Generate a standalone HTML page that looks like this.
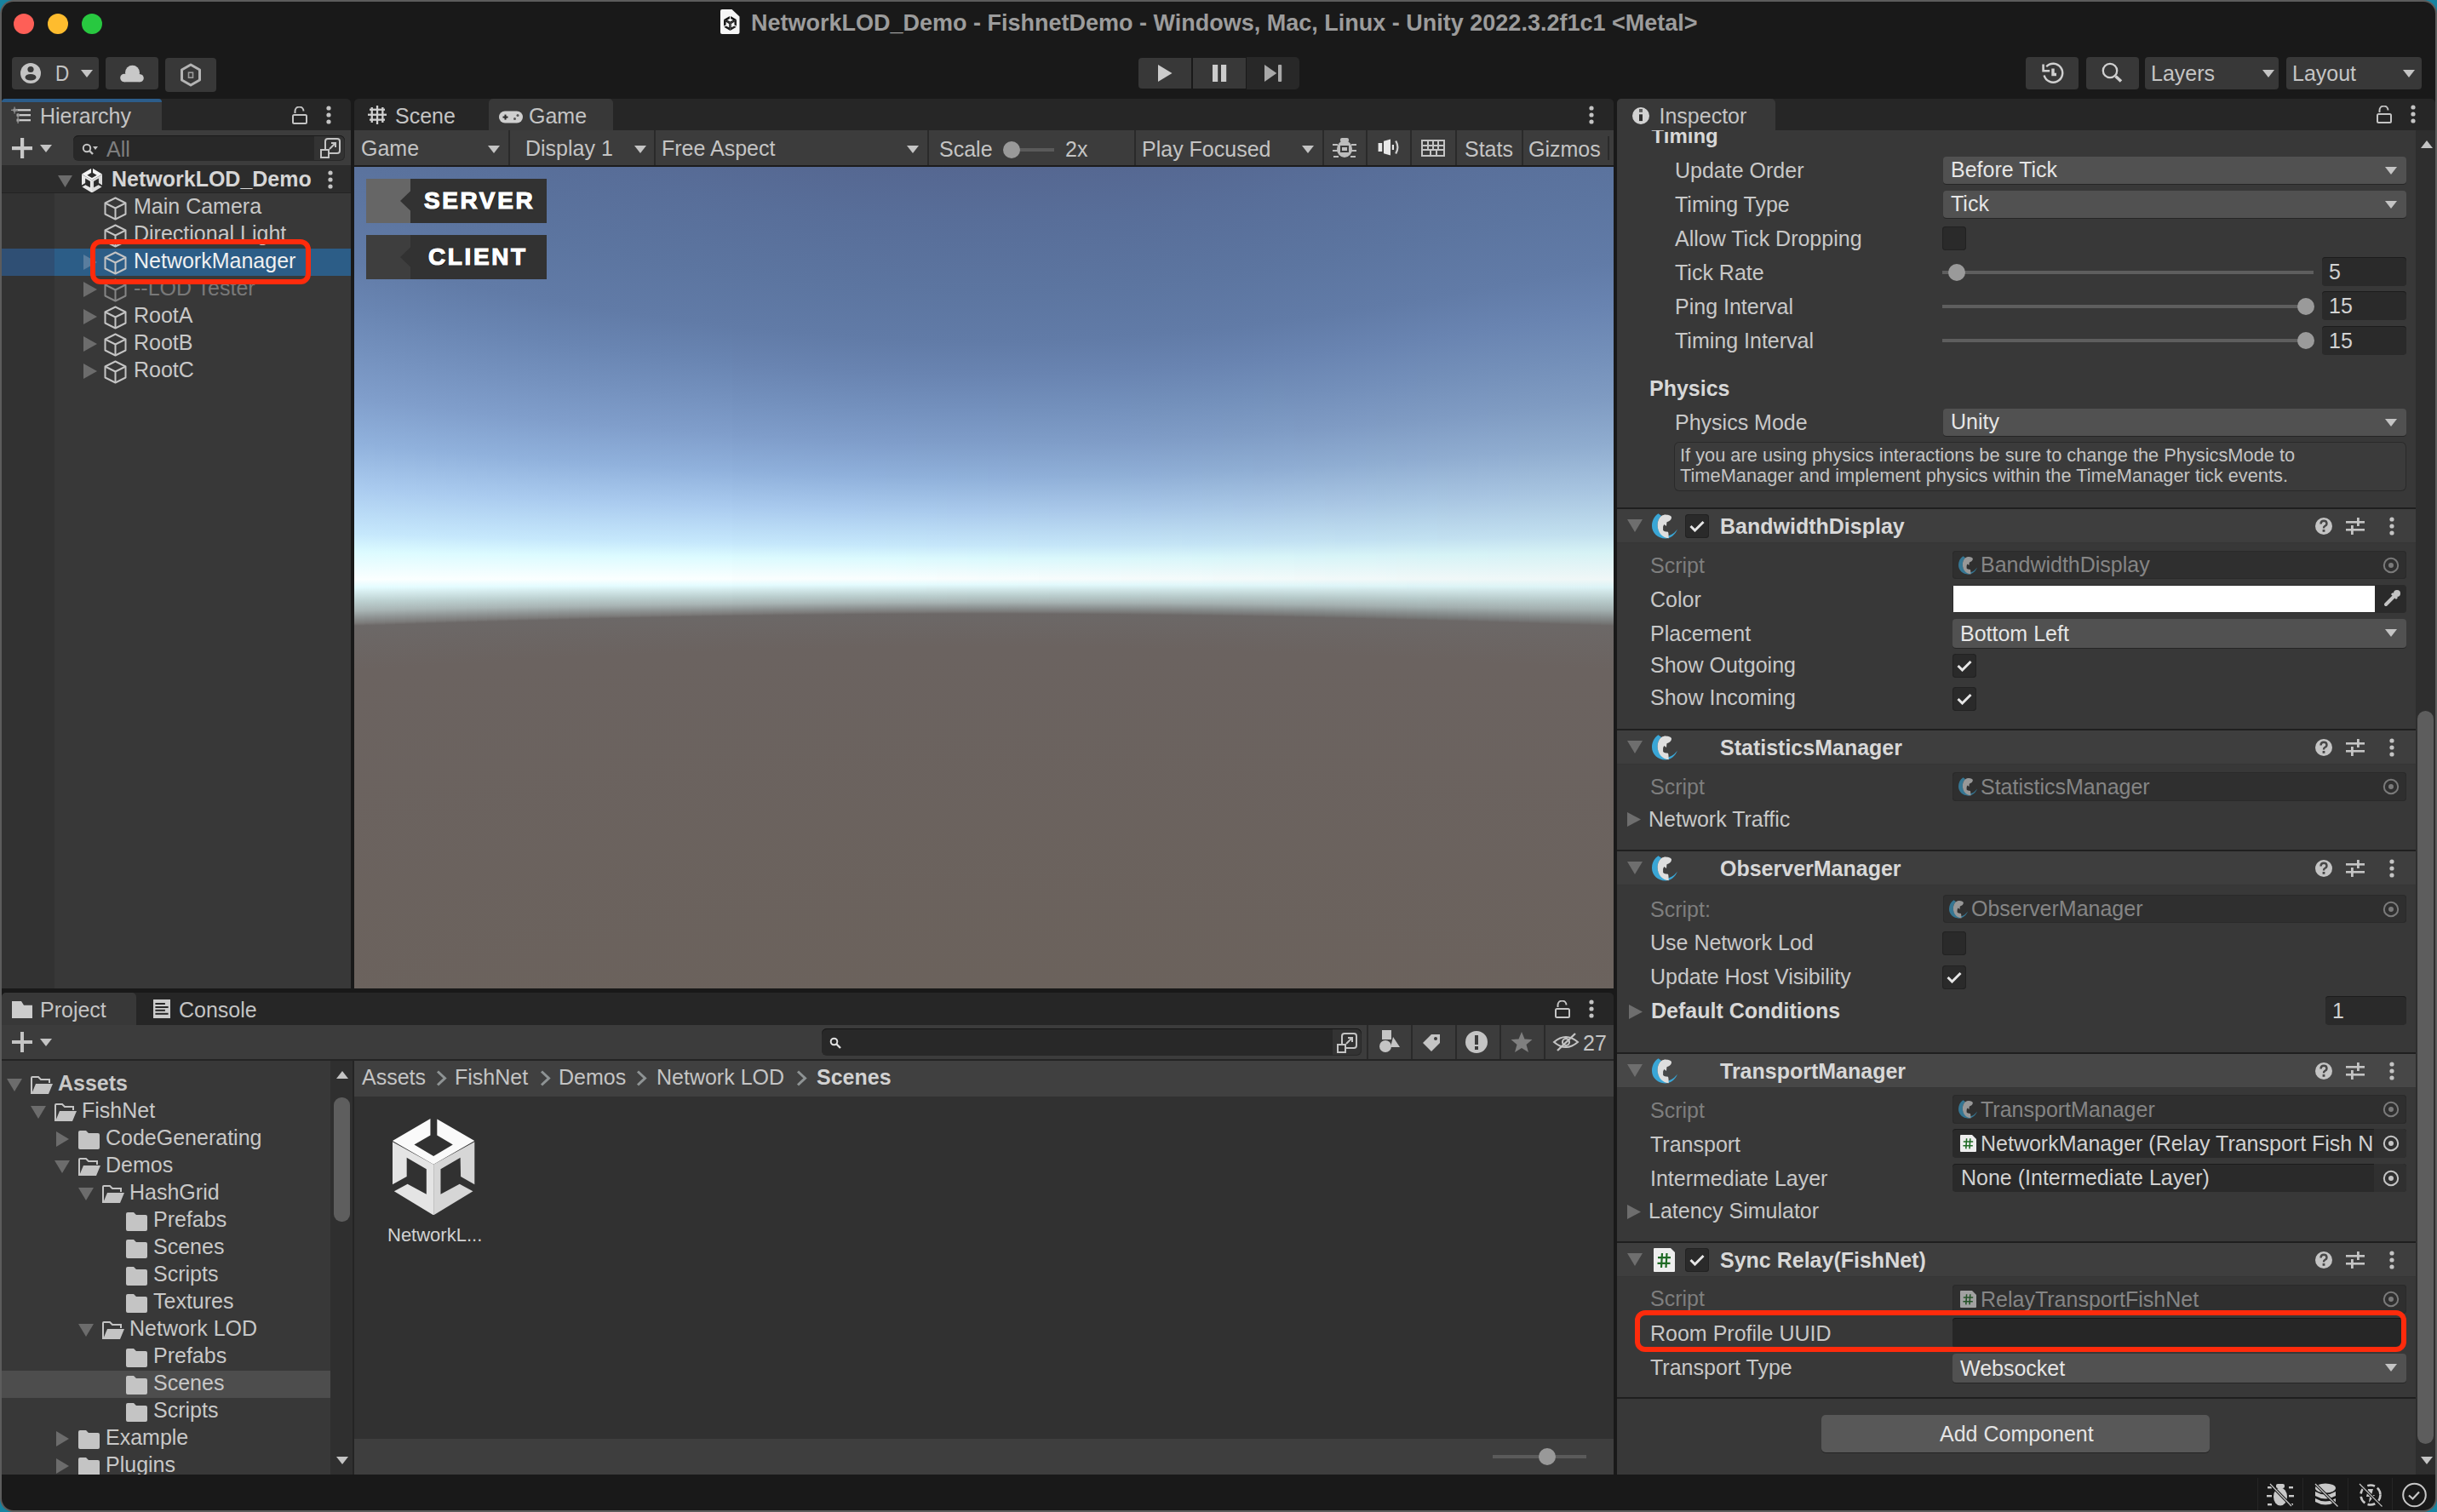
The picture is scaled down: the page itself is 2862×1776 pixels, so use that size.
<!DOCTYPE html><html><head><meta charset="utf-8"><style>
html,body{margin:0;padding:0;}
body{width:2862px;height:1776px;position:relative;overflow:hidden;background:#1783a0;font-family:"Liberation Sans",sans-serif;}
body div, body svg{position:absolute;}
.t{white-space:nowrap;line-height:1;font-family:"Liberation Sans",sans-serif;}
</style></head><body>
<div style="left:0px;top:0px;width:2862px;height:1776px;background:#5c5c5c;border-radius:16px;"></div><div style="left:2px;top:2px;width:2858px;height:1772px;background:#191919;border-radius:14px;"></div><div style="left:16px;top:16px;width:24px;height:24px;background:#fe5f57;border-radius:50%;"></div><div style="left:56px;top:16px;width:24px;height:24px;background:#febc2e;border-radius:50%;"></div><div style="left:96px;top:16px;width:24px;height:24px;background:#28c840;border-radius:50%;"></div><svg style="left:846px;top:11px;" width="23" height="29" viewBox="0 0 23 29"><path d="M2 0 H13.5 L22.5 8.5 V27 Q22.5 29 20.5 29 H2 Q0 29 0 27 V2 Q0 0 2 0Z" fill="#f6f6f6"/></svg><svg style="left:850px;top:18.8px" width="15" height="17" viewBox="235 160 1040 1225" preserveAspectRatio="none"><polygon points="235,440 715,160 715,370 510,490 755,635 1000,490 800,370 800,165 1275,440 755,740" fill="#111"/><polygon points="235,455 755,740 755,1385 255,1080 425,990 665,1120 665,800 415,655 415,895 235,995" fill="#181818"/><polygon points="1275,455 755,740 755,1385 1255,1080 1085,990 845,1120 845,800 1095,655 1100,895 1275,995" fill="#222"/></svg><div class="t" style="left:882px;top:14.1px;font-size:27px;color:#9c9c9c;font-weight:bold;">NetworkLOD_Demo - FishnetDemo - Windows, Mac, Linux - Unity 2022.3.2f1c1 &lt;Metal&gt;</div><div style="left:14px;top:67px;width:102px;height:38px;background:#383838;border-radius:4px;"></div><svg style="left:24px;top:74px;" width="24" height="24" viewBox="0 0 24 24"><circle cx="12" cy="12" r="12" fill="#c4c4c4"/><circle cx="12" cy="7.5" r="3.6" fill="#383838"/><ellipse cx="12" cy="16.8" rx="6.5" ry="3.8" fill="#383838"/></svg><div class="t" style="left:64px;top:73.8px;font-size:25px;color:#c4c4c4;font-weight:normal;transform:scaleX(0.9);">D</div><svg style="left:95.0px;top:82.0px;" width="14" height="9" viewBox="0 0 14 9"><polygon points="0,0 14,0 7.0,9" fill="#c4c4c4"/></svg><div style="left:124px;top:67px;width:62px;height:38px;background:#383838;border-radius:4px;"></div><svg style="left:141px;top:75.8px;" width="28" height="21" viewBox="0 0 28 21"><g fill="#c8c8c8"><circle cx="14.5" cy="9.3" r="8.5"/><circle cx="5" cy="15.5" r="4.8"/><circle cx="23.3" cy="15.8" r="4.5"/><rect x="5" y="11" width="18.3" height="9.3"/></g></svg><div style="left:194px;top:68px;width:60px;height:39.5px;background:#383838;border-radius:4px;"></div><svg style="left:211px;top:74px;" width="26" height="28" viewBox="0 0 26 28"><path d="M13 2 L23.5 8 V20 L13 26 L2.5 20 V8 Z" fill="none" stroke="#b4b4b4" stroke-width="3" stroke-linejoin="round"/><rect x="10.5" y="11.2" width="5" height="6" fill="none" stroke="#9a9a9a" stroke-width="1.6"/></svg><div style="left:1337px;top:68px;width:126px;height:36px;background:#383838;border-radius:4px 0 0 4px;"></div><div style="left:1399px;top:68px;width:2px;height:36px;background:#191919;"></div><div style="left:1464px;top:67.2px;width:61.5px;height:37.5px;background:#282828;border-radius:0 5px 5px 0;"></div><svg style="left:1360px;top:76px;" width="16.5" height="20" viewBox="0 0 16.5 20"><polygon points="0,0 16.5,10 0,20" fill="#cccccc"/></svg><svg style="left:1424px;top:76px;" width="17" height="20" viewBox="0 0 17 20"><rect x="0" y="0" width="6.2" height="20" fill="#cccccc"/><rect x="10" y="0" width="6.2" height="20" fill="#cccccc"/></svg><svg style="left:1485px;top:76px;" width="21" height="20" viewBox="0 0 21 20"><polygon points="0,0 14.3,10 0,20" fill="#a8a8a8"/><rect x="16" y="0" width="4.2" height="20" rx="1" fill="#a8a8a8"/></svg><div style="left:2379px;top:67px;width:62px;height:38px;background:#383838;border-radius:4px;"></div><svg style="left:2397px;top:72px;" width="28" height="28" viewBox="0 0 28 28"><path d="M6.2 6.2 A11 11 0 1 1 3.6 16.5" fill="none" stroke="#d0d0d0" stroke-width="2.4"/><path d="M2.6 3.5 V11.2 H10.2" fill="none" stroke="#d0d0d0" stroke-width="2.6"/><path d="M14 8.5 V15.5 H18" fill="none" stroke="#d0d0d0" stroke-width="3.4"/></svg><div style="left:2450px;top:67px;width:62px;height:38px;background:#383838;border-radius:4px;"></div><svg style="left:2467px;top:72px;" width="28" height="28" viewBox="0 0 28 28"><circle cx="11" cy="11" r="8.2" fill="none" stroke="#d0d0d0" stroke-width="2.3"/><line x1="17.5" y1="17.5" x2="24" y2="23.5" stroke="#d0d0d0" stroke-width="3.6"/></svg><div style="left:2519px;top:67px;width:157px;height:38px;background:#383838;border-radius:4px;"></div><div class="t" style="left:2526px;top:73.8px;font-size:25px;color:#c4c4c4;">Layers</div><svg style="left:2656.5px;top:82.0px;" width="14" height="9" viewBox="0 0 14 9"><polygon points="0,0 14,0 7.0,9" fill="#c4c4c4"/></svg><div style="left:2685px;top:67px;width:159px;height:38px;background:#383838;border-radius:4px;"></div><div class="t" style="left:2692px;top:73.8px;font-size:25px;color:#c4c4c4;">Layout</div><svg style="left:2822.0px;top:82.0px;" width="14" height="9" viewBox="0 0 14 9"><polygon points="0,0 14,0 7.0,9" fill="#c4c4c4"/></svg><div style="left:2650.5px;top:1736px;width:1.5px;height:37.5px;background:#262626;"></div><div style="left:2703.5px;top:1736px;width:1.5px;height:37.5px;background:#262626;"></div><div style="left:2756.5px;top:1736px;width:1.5px;height:37.5px;background:#262626;"></div><div style="left:2808.5px;top:1736px;width:1.5px;height:37.5px;background:#262626;"></div><div style="left:2px;top:116px;width:410px;height:37px;background:#262626;border-radius:5px 5px 0 0;"></div><div style="left:2px;top:116px;width:188px;height:37px;background:#3a3a3a;border-radius:5px 5px 0 0;"></div><div style="left:2px;top:116px;width:188px;height:4px;background:#2c5d8a;border-radius:4px 4px 0 0;"></div><svg style="left:13px;top:125px;" width="26" height="22" viewBox="0 0 26 22"><g fill="#d0d0d0"><rect x="6" y="3.2" width="17" height="2.2"/><rect x="10" y="9.1" width="13" height="2.2"/><rect x="10" y="15.1" width="13" height="2.2"/><rect x="2.6" y="2.8" width="3" height="3"/><rect x="6.6" y="8.7" width="3" height="3"/><rect x="6.6" y="14.7" width="3" height="3"/></g><g fill="#8a8a8a"><rect x="3.4" y="0.5" width="1.4" height="8"/><rect x="7.4" y="8" width="1.4" height="12"/><rect x="0" y="3.6" width="8" height="1.4"/></g></svg><div class="t" style="left:47px;top:123.8px;font-size:25px;color:#c4c4c4;">Hierarchy</div><svg style="left:343px;top:125px;" width="18" height="21" viewBox="0 0 18 21"><path d="M3.5 8 V5.5 A5 5 0 0 1 13.5 5.5" fill="none" stroke="#c4c4c4" stroke-width="2"/><rect x="1" y="10" width="16" height="10" rx="1.5" fill="none" stroke="#c4c4c4" stroke-width="2"/></svg><svg style="left:382px;top:122.5px;" width="8" height="24" viewBox="0 0 8 24"><circle cx="4" cy="4" r="2.6" fill="#c4c4c4"/><circle cx="4" cy="12" r="2.6" fill="#c4c4c4"/><circle cx="4" cy="20" r="2.6" fill="#c4c4c4"/></svg><div style="left:2px;top:153px;width:410px;height:41px;background:#3c3c3c;"></div><svg style="left:14px;top:162px;" width="24" height="24" viewBox="0 0 24 24"><rect x="10" y="0" width="4.2" height="24" fill="#c8c8c8"/><rect x="0" y="10" width="24" height="4.2" fill="#c8c8c8"/></svg><svg style="left:47.0px;top:169.5px;" width="14" height="9" viewBox="0 0 14 9"><polygon points="0,0 14,0 7.0,9" fill="#c4c4c4"/></svg><div style="left:86px;top:159px;width:319px;height:30px;background:#282828;border-radius:6px;box-shadow:inset 0 1px 0 #1a1a1a;"></div><div style="left:369px;top:160px;width:35px;height:28px;background:#333333;border-radius:0 5px 5px 0;"></div><svg style="left:96px;top:168px;" width="20" height="16" viewBox="0 0 20 16"><circle cx="6" cy="6" r="4.2" fill="none" stroke="#c4c4c4" stroke-width="2"/><line x1="9" y1="9" x2="13" y2="13" stroke="#c4c4c4" stroke-width="2.4"/><polygon points="13,4 19,4 16,8" fill="#c4c4c4"/></svg><div class="t" style="left:125px;top:162.8px;font-size:25px;color:#7e7e7e;">All</div><svg style="left:376px;top:162px;" width="24" height="24" viewBox="0 0 24 24"><rect x="1" y="14" width="9" height="9" fill="none" stroke="#c4c4c4" stroke-width="2"/><path d="M6 14 V4 Q6 1 9 1 H20 Q23 1 23 4 V15 Q23 18 20 18 H10" fill="none" stroke="#c4c4c4" stroke-width="2"/><path d="M11 13 L18 6 M13 6 H18 V11" fill="none" stroke="#c4c4c4" stroke-width="2"/></svg><div style="left:2px;top:194px;width:410px;height:967px;background:#383838;"></div><div style="left:2px;top:227px;width:62px;height:934px;background:#323232;"></div><div style="left:2px;top:194px;width:410px;height:32px;background:#2c2c2c;"></div><div style="left:2px;top:226px;width:410px;height:1px;background:#242424;"></div><svg style="left:68.0px;top:206.0px;" width="17" height="14" viewBox="0 0 17 14"><polygon points="0,0 17,0 8.5,14" fill="#6c6c6c"/></svg><svg style="left:96px;top:197.5px" width="24" height="28.5" viewBox="235 160 1040 1225" preserveAspectRatio="none"><polygon points="235,440 715,160 715,370 510,490 755,635 1000,490 800,370 800,165 1275,440 755,740" fill="#f4f4f4"/><polygon points="235,455 755,740 755,1385 255,1080 425,990 665,1120 665,800 415,655 415,895 235,995" fill="#e8e8e8"/><polygon points="1275,455 755,740 755,1385 1255,1080 1085,990 845,1120 845,800 1095,655 1100,895 1275,995" fill="#dcdcdc"/></svg><div class="t" style="left:131px;top:197.8px;font-size:25px;color:#d6d6d6;font-weight:bold;">NetworkLOD_Demo</div><svg style="left:384px;top:199px;" width="8" height="24" viewBox="0 0 8 24"><circle cx="4" cy="4" r="2.6" fill="#c4c4c4"/><circle cx="4" cy="12" r="2.6" fill="#c4c4c4"/><circle cx="4" cy="20" r="2.6" fill="#c4c4c4"/></svg><svg style="left:122px;top:230.5px;" width="27" height="28" viewBox="0 0 27 28"><g fill="none" stroke="#c4c4c4" stroke-width="2" stroke-linejoin="round"><path d="M13.5 1.5 L25.5 7.5 V20.5 L13.5 26.5 L1.5 20.5 V7.5 Z"/><path d="M1.5 7.5 L13.5 13.5 L25.5 7.5 M13.5 13.5 V26.5"/></g></svg><div class="t" style="left:157px;top:229.8px;font-size:25px;color:#c8c8c8;">Main Camera</div><svg style="left:122px;top:262.5px;" width="27" height="28" viewBox="0 0 27 28"><g fill="none" stroke="#c4c4c4" stroke-width="2" stroke-linejoin="round"><path d="M13.5 1.5 L25.5 7.5 V20.5 L13.5 26.5 L1.5 20.5 V7.5 Z"/><path d="M1.5 7.5 L13.5 13.5 L25.5 7.5 M13.5 13.5 V26.5"/></g></svg><div class="t" style="left:157px;top:261.8px;font-size:25px;color:#c8c8c8;">Directional Light</div><div style="left:2px;top:292px;width:410px;height:32px;background:#2c5d87;"></div><div style="left:2px;top:292px;width:62px;height:32px;background:#2f4f74;"></div><svg style="left:98.0px;top:299.0px;" width="16" height="18" viewBox="0 0 16 18"><polygon points="0,0 16,9.0 0,18" fill="#5a7d9e"/></svg><svg style="left:122px;top:294.5px;" width="27" height="28" viewBox="0 0 27 28"><g fill="none" stroke="#c4c4c4" stroke-width="2" stroke-linejoin="round"><path d="M13.5 1.5 L25.5 7.5 V20.5 L13.5 26.5 L1.5 20.5 V7.5 Z"/><path d="M1.5 7.5 L13.5 13.5 L25.5 7.5 M13.5 13.5 V26.5"/></g></svg><div class="t" style="left:157px;top:293.8px;font-size:25px;color:#f0f0f0;">NetworkManager</div><svg style="left:98.0px;top:331.0px;" width="16" height="18" viewBox="0 0 16 18"><polygon points="0,0 16,9.0 0,18" fill="#6c6c6c"/></svg><svg style="left:122px;top:326.5px;" width="27" height="28" viewBox="0 0 27 28"><g fill="none" stroke="#858585" stroke-width="2" stroke-linejoin="round"><path d="M13.5 1.5 L25.5 7.5 V20.5 L13.5 26.5 L1.5 20.5 V7.5 Z"/><path d="M1.5 7.5 L13.5 13.5 L25.5 7.5 M13.5 13.5 V26.5"/></g></svg><div class="t" style="left:157px;top:325.8px;font-size:25px;color:#787878;">--LOD Tester</div><svg style="left:98.0px;top:363.0px;" width="16" height="18" viewBox="0 0 16 18"><polygon points="0,0 16,9.0 0,18" fill="#6c6c6c"/></svg><svg style="left:122px;top:358.5px;" width="27" height="28" viewBox="0 0 27 28"><g fill="none" stroke="#c4c4c4" stroke-width="2" stroke-linejoin="round"><path d="M13.5 1.5 L25.5 7.5 V20.5 L13.5 26.5 L1.5 20.5 V7.5 Z"/><path d="M1.5 7.5 L13.5 13.5 L25.5 7.5 M13.5 13.5 V26.5"/></g></svg><div class="t" style="left:157px;top:357.8px;font-size:25px;color:#c8c8c8;">RootA</div><svg style="left:98.0px;top:395.0px;" width="16" height="18" viewBox="0 0 16 18"><polygon points="0,0 16,9.0 0,18" fill="#6c6c6c"/></svg><svg style="left:122px;top:390.5px;" width="27" height="28" viewBox="0 0 27 28"><g fill="none" stroke="#c4c4c4" stroke-width="2" stroke-linejoin="round"><path d="M13.5 1.5 L25.5 7.5 V20.5 L13.5 26.5 L1.5 20.5 V7.5 Z"/><path d="M1.5 7.5 L13.5 13.5 L25.5 7.5 M13.5 13.5 V26.5"/></g></svg><div class="t" style="left:157px;top:389.8px;font-size:25px;color:#c8c8c8;">RootB</div><svg style="left:98.0px;top:427.0px;" width="16" height="18" viewBox="0 0 16 18"><polygon points="0,0 16,9.0 0,18" fill="#6c6c6c"/></svg><svg style="left:122px;top:422.5px;" width="27" height="28" viewBox="0 0 27 28"><g fill="none" stroke="#c4c4c4" stroke-width="2" stroke-linejoin="round"><path d="M13.5 1.5 L25.5 7.5 V20.5 L13.5 26.5 L1.5 20.5 V7.5 Z"/><path d="M1.5 7.5 L13.5 13.5 L25.5 7.5 M13.5 13.5 V26.5"/></g></svg><div class="t" style="left:157px;top:421.8px;font-size:25px;color:#c8c8c8;">RootC</div><div style="left:105.5px;top:280.5px;width:247px;height:41px;border:6.5px solid #fe2b0c;border-radius:12px;"></div><div style="left:412px;top:116px;width:4px;height:1045px;background:#191919;"></div><div style="left:416px;top:116px;width:1479px;height:37px;background:#262626;border-radius:5px 5px 0 0;"></div><div style="left:574px;top:116px;width:146px;height:37px;background:#383838;border-radius:5px 5px 0 0;"></div><svg style="left:432px;top:124px;" width="22" height="22" viewBox="0 0 22 22"><g fill="#d0d0d0"><rect x="3.6" y="2" width="2.3" height="18"/><rect x="9.9" y="0" width="2.3" height="22"/><rect x="16.2" y="2" width="2.3" height="18"/><rect x="2" y="3.6" width="18" height="2.3"/><rect x="0" y="9.6" width="22" height="2.3"/><rect x="2" y="15.5" width="18" height="2.3"/></g></svg><div class="t" style="left:464px;top:123.8px;font-size:25px;color:#c4c4c4;">Scene</div><svg style="left:586px;top:129.5px;" width="28" height="15" viewBox="0 0 28 15"><rect x="0" y="0.5" width="28" height="14" rx="7" fill="#cfcfcf"/><rect x="4.5" y="6.6" width="6" height="2" fill="#2a2a2a"/><rect x="6.5" y="4.6" width="2" height="6" fill="#2a2a2a"/><circle cx="18.5" cy="9.5" r="1.5" fill="#555"/><circle cx="22" cy="5.5" r="1.5" fill="#555"/></svg><div class="t" style="left:621px;top:123.8px;font-size:25px;color:#c4c4c4;">Game</div><svg style="left:1865px;top:122.5px;" width="8" height="24" viewBox="0 0 8 24"><circle cx="4" cy="4" r="2.6" fill="#c4c4c4"/><circle cx="4" cy="12" r="2.6" fill="#c4c4c4"/><circle cx="4" cy="20" r="2.6" fill="#c4c4c4"/></svg><div style="left:416px;top:153px;width:1479px;height:41px;background:#3c3c3c;"></div><div style="left:597px;top:153px;width:2px;height:41px;background:#2a2a2a;"></div><div style="left:768px;top:153px;width:2px;height:41px;background:#2a2a2a;"></div><div style="left:1089px;top:153px;width:2px;height:41px;background:#2a2a2a;"></div><div style="left:1332px;top:153px;width:2px;height:41px;background:#2a2a2a;"></div><div style="left:1553px;top:153px;width:2px;height:41px;background:#2a2a2a;"></div><div style="left:1604px;top:153px;width:2px;height:41px;background:#2a2a2a;"></div><div style="left:1656px;top:153px;width:2px;height:41px;background:#2a2a2a;"></div><div style="left:1709px;top:153px;width:2px;height:41px;background:#2a2a2a;"></div><div style="left:1787px;top:153px;width:2px;height:41px;background:#2a2a2a;"></div><div style="left:1888px;top:160px;width:2px;height:28px;background:#2a2a2a;"></div><div class="t" style="left:424px;top:161.8px;font-size:25px;color:#c4c4c4;">Game</div><svg style="left:573.0px;top:170.5px;" width="14" height="9" viewBox="0 0 14 9"><polygon points="0,0 14,0 7.0,9" fill="#c4c4c4"/></svg><div class="t" style="left:617px;top:161.8px;font-size:25px;color:#c4c4c4;">Display 1</div><svg style="left:745.0px;top:170.5px;" width="14" height="9" viewBox="0 0 14 9"><polygon points="0,0 14,0 7.0,9" fill="#c4c4c4"/></svg><div class="t" style="left:777px;top:161.8px;font-size:25px;color:#c4c4c4;">Free Aspect</div><svg style="left:1064.5px;top:170.5px;" width="14" height="9" viewBox="0 0 14 9"><polygon points="0,0 14,0 7.0,9" fill="#c4c4c4"/></svg><div class="t" style="left:1103px;top:162.8px;font-size:25px;color:#c4c4c4;">Scale</div><div style="left:1188px;top:174px;width:50px;height:4px;background:#5a5a5a;"></div><div style="left:1178px;top:166px;width:20px;height:20px;background:#999999;border-radius:50%;"></div><div class="t" style="left:1251px;top:162.8px;font-size:25px;color:#c4c4c4;">2x</div><div class="t" style="left:1341px;top:162.8px;font-size:25px;color:#c4c4c4;">Play Focused</div><svg style="left:1529.0px;top:170.5px;" width="14" height="9" viewBox="0 0 14 9"><polygon points="0,0 14,0 7.0,9" fill="#c4c4c4"/></svg><svg style="left:1565px;top:160px;" width="28" height="28" viewBox="0 0 28 28"><g fill="#bdbdbd"><ellipse cx="14" cy="15" rx="9" ry="10"/><rect x="9" y="2" width="10" height="5" rx="2"/><rect x="0" y="9" width="6" height="2"/><rect x="22" y="9" width="6" height="2"/><rect x="0" y="16" width="6" height="2"/><rect x="22" y="16" width="6" height="2"/><rect x="1" y="23" width="6" height="2"/><rect x="21" y="23" width="6" height="2"/></g><rect x="9" y="11" width="10" height="8" fill="#3c3c3c"/><rect x="11" y="13" width="6" height="4" fill="#bdbdbd"/></svg><svg style="left:1618px;top:163px;" width="27" height="21" viewBox="0 0 27 21"><g fill="#e8e8e8"><rect x="0.6" y="5" width="4.6" height="10"/><polygon points="7,2.8 15,0.6 15,19.4 7,17.2"/><rect x="16.8" y="7" width="2.2" height="6"/></g><path d="M21.2 2.5 Q25.6 10 21.2 17.5" fill="none" stroke="#cfcfcf" stroke-width="2.2"/></svg><svg style="left:1669px;top:164px;" width="28" height="20" viewBox="0 0 28 20"><rect x="1" y="1" width="26" height="18" fill="none" stroke="#c4c4c4" stroke-width="2"/><g fill="#c4c4c4"><rect x="1" y="6" width="26" height="2"/><rect x="1" y="11" width="26" height="2"/><rect x="7" y="1" width="2" height="12"/><rect x="13" y="1" width="2" height="12"/><rect x="19" y="1" width="2" height="12"/><rect x="10" y="13" width="2" height="6"/><rect x="17" y="13" width="2" height="6"/></g></svg><div class="t" style="left:1720px;top:162.8px;font-size:25px;color:#c4c4c4;">Stats</div><div class="t" style="left:1795px;top:162.8px;font-size:25px;color:#c4c4c4;">Gizmos</div><div style="left:416px;top:194px;width:1479px;height:2px;background:#1c1c1c;"></div><div style="left:416px;top:196px;width:1479px;height:965px;overflow:hidden;"><div style="left:0px;top:0;width:12px;height:965px;background:linear-gradient(to bottom,#556791 -159.5px,#586e99 -74.3px,#5c75a0 32.1px,#617ba7 111.9px,#6985b2 165.2px,#7491be 218.4px,#809ecb 271.6px,#90b1dc 324.8px,#aacbef 378.1px,#c6e8fc 431.3px,#dcfbff 452.6px,#fbffff 484.5px,#e4fcff 493.8px,#d5ebed 499.9px,#bcd0d0 510.4px,#a9b5b5 521.1px,#8e9393 529.5px,#7c7b7a 535.9px,#6c6867 539.0px,#6b6360 590.9px,#6b625c 1124.5px);"></div><div style="left:12px;top:0;width:12px;height:965px;background:linear-gradient(to bottom,#556791 -154.9px,#586e99 -70.4px,#5c75a0 35.3px,#617ba7 114.6px,#6985b2 167.4px,#7491be 220.3px,#809ecb 273.1px,#90b1dc 325.9px,#aacbef 378.8px,#c6e8fc 431.6px,#dcfbff 452.8px,#fbffff 484.5px,#e4fcff 493.7px,#d5ebed 499.8px,#bcd0d0 510.2px,#a9b5b5 520.8px,#8e9393 529.1px,#7c7b7a 535.5px,#6c6867 538.6px,#6b6360 590.2px,#6b625c 1119.9px);"></div><div style="left:24px;top:0;width:12px;height:965px;background:linear-gradient(to bottom,#556791 -150.4px,#586e99 -66.5px,#5c75a0 38.5px,#617ba7 117.2px,#6985b2 169.6px,#7491be 222.1px,#809ecb 274.6px,#90b1dc 327.1px,#aacbef 379.5px,#c6e8fc 432.0px,#dcfbff 453.0px,#fbffff 484.5px,#e4fcff 493.7px,#d5ebed 499.7px,#bcd0d0 510.0px,#a9b5b5 520.5px,#8e9393 528.8px,#7c7b7a 535.1px,#6c6867 538.3px,#6b6360 589.4px,#6b625c 1115.4px);"></div><div style="left:36px;top:0;width:12px;height:965px;background:linear-gradient(to bottom,#556791 -146.0px,#586e99 -62.6px,#5c75a0 41.6px,#617ba7 119.7px,#6985b2 171.8px,#7491be 223.9px,#809ecb 276.0px,#90b1dc 328.1px,#aacbef 380.3px,#c6e8fc 432.4px,#dcfbff 453.2px,#fbffff 484.5px,#e4fcff 493.6px,#d5ebed 499.6px,#bcd0d0 509.9px,#a9b5b5 520.3px,#8e9393 528.5px,#7c7b7a 534.7px,#6c6867 537.9px,#6b6360 588.7px,#6b625c 1111.0px);"></div><div style="left:48px;top:0;width:12px;height:965px;background:linear-gradient(to bottom,#556791 -141.6px,#586e99 -58.8px,#5c75a0 44.7px,#617ba7 122.3px,#6985b2 174.0px,#7491be 225.8px,#809ecb 277.5px,#90b1dc 329.2px,#aacbef 381.0px,#c6e8fc 432.7px,#dcfbff 453.4px,#fbffff 484.4px,#e4fcff 493.5px,#d5ebed 499.4px,#bcd0d0 509.7px,#a9b5b5 520.0px,#8e9393 528.2px,#7c7b7a 534.4px,#6c6867 537.5px,#6b6360 587.9px,#6b625c 1106.6px);"></div><div style="left:60px;top:0;width:12px;height:965px;background:linear-gradient(to bottom,#556791 -137.2px,#586e99 -55.0px,#5c75a0 47.8px,#617ba7 124.8px,#6985b2 176.2px,#7491be 227.6px,#809ecb 278.9px,#90b1dc 330.3px,#aacbef 381.7px,#c6e8fc 433.1px,#dcfbff 453.6px,#fbffff 484.4px,#e4fcff 493.4px,#d5ebed 499.3px,#bcd0d0 509.5px,#a9b5b5 519.7px,#8e9393 527.8px,#7c7b7a 534.0px,#6c6867 537.1px,#6b6360 587.2px,#6b625c 1102.2px);"></div><div style="left:72px;top:0;width:12px;height:965px;background:linear-gradient(to bottom,#556791 -132.9px,#586e99 -51.2px,#5c75a0 50.8px,#617ba7 127.3px,#6985b2 178.3px,#7491be 229.3px,#809ecb 280.4px,#90b1dc 331.4px,#aacbef 382.4px,#c6e8fc 433.4px,#dcfbff 453.8px,#fbffff 484.4px,#e4fcff 493.3px,#d5ebed 499.2px,#bcd0d0 509.3px,#a9b5b5 519.5px,#8e9393 527.5px,#7c7b7a 533.6px,#6c6867 536.7px,#6b6360 586.4px,#6b625c 1097.9px);"></div><div style="left:84px;top:0;width:12px;height:965px;background:linear-gradient(to bottom,#556791 -128.6px,#586e99 -47.5px,#5c75a0 53.8px,#617ba7 129.8px,#6985b2 180.4px,#7491be 231.1px,#809ecb 281.8px,#90b1dc 332.4px,#aacbef 383.1px,#c6e8fc 433.7px,#dcfbff 454.0px,#fbffff 484.4px,#e4fcff 493.3px,#d5ebed 499.1px,#bcd0d0 509.1px,#a9b5b5 519.2px,#8e9393 527.2px,#7c7b7a 533.3px,#6c6867 536.3px,#6b6360 585.7px,#6b625c 1093.6px);"></div><div style="left:96px;top:0;width:12px;height:965px;background:linear-gradient(to bottom,#556791 -124.4px,#586e99 -43.9px,#5c75a0 56.8px,#617ba7 132.2px,#6985b2 182.5px,#7491be 232.8px,#809ecb 283.1px,#90b1dc 333.5px,#aacbef 383.8px,#c6e8fc 434.1px,#dcfbff 454.2px,#fbffff 484.4px,#e4fcff 493.2px,#d5ebed 499.0px,#bcd0d0 508.9px,#a9b5b5 519.0px,#8e9393 526.9px,#7c7b7a 532.9px,#6c6867 536.0px,#6b6360 585.0px,#6b625c 1089.4px);"></div><div style="left:108px;top:0;width:12px;height:965px;background:linear-gradient(to bottom,#556791 -120.2px,#586e99 -40.2px,#5c75a0 59.7px,#617ba7 134.6px,#6985b2 184.6px,#7491be 234.6px,#809ecb 284.5px,#90b1dc 334.5px,#aacbef 384.4px,#c6e8fc 434.4px,#dcfbff 454.4px,#fbffff 484.4px,#e4fcff 493.1px,#d5ebed 498.9px,#bcd0d0 508.7px,#a9b5b5 518.7px,#8e9393 526.6px,#7c7b7a 532.6px,#6c6867 535.6px,#6b6360 584.3px,#6b625c 1085.2px);"></div><div style="left:120px;top:0;width:12px;height:965px;background:linear-gradient(to bottom,#556791 -116.1px,#586e99 -36.7px,#5c75a0 62.6px,#617ba7 137.0px,#6985b2 186.6px,#7491be 236.3px,#809ecb 285.9px,#90b1dc 335.5px,#aacbef 385.1px,#c6e8fc 434.7px,#dcfbff 454.6px,#fbffff 484.4px,#e4fcff 493.0px,#d5ebed 498.8px,#bcd0d0 508.6px,#a9b5b5 518.5px,#8e9393 526.3px,#7c7b7a 532.2px,#6c6867 535.2px,#6b6360 583.6px,#6b625c 1081.1px);"></div><div style="left:132px;top:0;width:12px;height:965px;background:linear-gradient(to bottom,#556791 -112.0px,#586e99 -33.1px,#5c75a0 65.4px,#617ba7 139.4px,#6985b2 188.6px,#7491be 237.9px,#809ecb 287.2px,#90b1dc 336.5px,#aacbef 385.8px,#c6e8fc 435.1px,#dcfbff 454.8px,#fbffff 484.3px,#e4fcff 493.0px,#d5ebed 498.6px,#bcd0d0 508.4px,#a9b5b5 518.2px,#8e9393 526.0px,#7c7b7a 531.9px,#6c6867 534.9px,#6b6360 582.9px,#6b625c 1077.0px);"></div><div style="left:144px;top:0;width:12px;height:965px;background:linear-gradient(to bottom,#556791 -108.0px,#586e99 -29.6px,#5c75a0 68.3px,#617ba7 141.7px,#6985b2 190.6px,#7491be 239.6px,#809ecb 288.5px,#90b1dc 337.5px,#aacbef 386.4px,#c6e8fc 435.4px,#dcfbff 455.0px,#fbffff 484.3px,#e4fcff 492.9px,#d5ebed 498.5px,#bcd0d0 508.2px,#a9b5b5 518.0px,#8e9393 525.7px,#7c7b7a 531.6px,#6c6867 534.5px,#6b6360 582.2px,#6b625c 1073.0px);"></div><div style="left:156px;top:0;width:12px;height:965px;background:linear-gradient(to bottom,#556791 -104.0px,#586e99 -26.2px,#5c75a0 71.0px,#617ba7 144.0px,#6985b2 192.6px,#7491be 241.2px,#809ecb 289.8px,#90b1dc 338.5px,#aacbef 387.1px,#c6e8fc 435.7px,#dcfbff 455.2px,#fbffff 484.3px,#e4fcff 492.8px,#d5ebed 498.4px,#bcd0d0 508.0px,#a9b5b5 517.8px,#8e9393 525.4px,#7c7b7a 531.2px,#6c6867 534.2px,#6b6360 581.6px,#6b625c 1069.0px);"></div><div style="left:168px;top:0;width:12px;height:965px;background:linear-gradient(to bottom,#556791 -100.1px,#586e99 -22.8px,#5c75a0 73.8px,#617ba7 146.2px,#6985b2 194.5px,#7491be 242.8px,#809ecb 291.1px,#90b1dc 339.4px,#aacbef 387.7px,#c6e8fc 436.0px,#dcfbff 455.3px,#fbffff 484.3px,#e4fcff 492.8px,#d5ebed 498.3px,#bcd0d0 507.9px,#a9b5b5 517.5px,#8e9393 525.1px,#7c7b7a 530.9px,#6c6867 533.8px,#6b6360 580.9px,#6b625c 1065.1px);"></div><div style="left:180px;top:0;width:12px;height:965px;background:linear-gradient(to bottom,#556791 -96.2px,#586e99 -19.5px,#5c75a0 76.5px,#617ba7 148.5px,#6985b2 196.4px,#7491be 244.4px,#809ecb 292.4px,#90b1dc 340.4px,#aacbef 388.3px,#c6e8fc 436.3px,#dcfbff 455.5px,#fbffff 484.3px,#e4fcff 492.7px,#d5ebed 498.2px,#bcd0d0 507.7px,#a9b5b5 517.3px,#8e9393 524.8px,#7c7b7a 530.6px,#6c6867 533.5px,#6b6360 580.3px,#6b625c 1061.2px);"></div><div style="left:192px;top:0;width:12px;height:965px;background:linear-gradient(to bottom,#556791 -92.4px,#586e99 -16.2px,#5c75a0 79.2px,#617ba7 150.6px,#6985b2 198.3px,#7491be 246.0px,#809ecb 293.6px,#90b1dc 341.3px,#aacbef 389.0px,#c6e8fc 436.6px,#dcfbff 455.7px,#fbffff 484.3px,#e4fcff 492.6px,#d5ebed 498.1px,#bcd0d0 507.5px,#a9b5b5 517.1px,#8e9393 524.6px,#7c7b7a 530.3px,#6c6867 533.1px,#6b6360 579.6px,#6b625c 1057.4px);"></div><div style="left:204px;top:0;width:12px;height:965px;background:linear-gradient(to bottom,#556791 -88.7px,#586e99 -12.9px,#5c75a0 81.8px,#617ba7 152.8px,#6985b2 200.2px,#7491be 247.5px,#809ecb 294.9px,#90b1dc 342.2px,#aacbef 389.6px,#c6e8fc 436.9px,#dcfbff 455.9px,#fbffff 484.3px,#e4fcff 492.6px,#d5ebed 498.0px,#bcd0d0 507.4px,#a9b5b5 516.8px,#8e9393 524.3px,#7c7b7a 530.0px,#6c6867 532.8px,#6b6360 579.0px,#6b625c 1053.7px);"></div><div style="left:216px;top:0;width:12px;height:965px;background:linear-gradient(to bottom,#556791 -85.0px,#586e99 -9.7px,#5c75a0 84.4px,#617ba7 154.9px,#6985b2 202.0px,#7491be 249.0px,#809ecb 296.1px,#90b1dc 343.1px,#aacbef 390.2px,#c6e8fc 437.2px,#dcfbff 456.0px,#fbffff 484.3px,#e4fcff 492.5px,#d5ebed 497.9px,#bcd0d0 507.2px,#a9b5b5 516.6px,#8e9393 524.0px,#7c7b7a 529.7px,#6c6867 532.5px,#6b6360 578.4px,#6b625c 1050.0px);"></div><div style="left:228px;top:0;width:12px;height:965px;background:linear-gradient(to bottom,#556791 -81.4px,#586e99 -6.6px,#5c75a0 86.9px,#617ba7 157.0px,#6985b2 203.8px,#7491be 250.5px,#809ecb 297.3px,#90b1dc 344.0px,#aacbef 390.8px,#c6e8fc 437.5px,#dcfbff 456.2px,#fbffff 484.3px,#e4fcff 492.4px,#d5ebed 497.8px,#bcd0d0 507.0px,#a9b5b5 516.4px,#8e9393 523.8px,#7c7b7a 529.4px,#6c6867 532.2px,#6b6360 577.7px,#6b625c 1046.4px);"></div><div style="left:240px;top:0;width:12px;height:965px;background:linear-gradient(to bottom,#556791 -77.8px,#586e99 -3.5px,#5c75a0 89.4px,#617ba7 159.1px,#6985b2 205.5px,#7491be 252.0px,#809ecb 298.4px,#90b1dc 344.9px,#aacbef 391.3px,#c6e8fc 437.8px,#dcfbff 456.4px,#fbffff 484.2px,#e4fcff 492.4px,#d5ebed 497.7px,#bcd0d0 506.9px,#a9b5b5 516.2px,#8e9393 523.5px,#7c7b7a 529.1px,#6c6867 531.9px,#6b6360 577.1px,#6b625c 1042.8px);"></div><div style="left:252px;top:0;width:12px;height:965px;background:linear-gradient(to bottom,#556791 -74.4px,#586e99 -0.5px,#5c75a0 91.8px,#617ba7 161.1px,#6985b2 207.2px,#7491be 253.4px,#809ecb 299.6px,#90b1dc 345.7px,#aacbef 391.9px,#c6e8fc 438.1px,#dcfbff 456.5px,#fbffff 484.2px,#e4fcff 492.3px,#d5ebed 497.6px,#bcd0d0 506.7px,#a9b5b5 516.0px,#8e9393 523.2px,#7c7b7a 528.8px,#6c6867 531.5px,#6b6360 576.6px,#6b625c 1039.4px);"></div><div style="left:264px;top:0;width:12px;height:965px;background:linear-gradient(to bottom,#556791 -70.9px,#586e99 2.5px,#5c75a0 94.2px,#617ba7 163.1px,#6985b2 208.9px,#7491be 254.8px,#809ecb 300.7px,#90b1dc 346.6px,#aacbef 392.5px,#c6e8fc 438.3px,#dcfbff 456.7px,#fbffff 484.2px,#e4fcff 492.2px,#d5ebed 497.5px,#bcd0d0 506.6px,#a9b5b5 515.8px,#8e9393 523.0px,#7c7b7a 528.5px,#6c6867 531.2px,#6b6360 576.0px,#6b625c 1035.9px);"></div><div style="left:276px;top:0;width:12px;height:965px;background:linear-gradient(to bottom,#556791 -67.6px,#586e99 5.4px,#5c75a0 96.6px,#617ba7 165.0px,#6985b2 210.6px,#7491be 256.2px,#809ecb 301.8px,#90b1dc 347.4px,#aacbef 393.0px,#c6e8fc 438.6px,#dcfbff 456.8px,#fbffff 484.2px,#e4fcff 492.2px,#d5ebed 497.4px,#bcd0d0 506.4px,#a9b5b5 515.6px,#8e9393 522.7px,#7c7b7a 528.2px,#6c6867 531.0px,#6b6360 575.4px,#6b625c 1032.6px);"></div><div style="left:288px;top:0;width:12px;height:965px;background:linear-gradient(to bottom,#556791 -64.3px,#586e99 8.2px,#5c75a0 98.9px,#617ba7 166.9px,#6985b2 212.2px,#7491be 257.6px,#809ecb 302.9px,#90b1dc 348.2px,#aacbef 393.5px,#c6e8fc 438.9px,#dcfbff 457.0px,#fbffff 484.2px,#e4fcff 492.1px,#d5ebed 497.3px,#bcd0d0 506.3px,#a9b5b5 515.4px,#8e9393 522.5px,#7c7b7a 527.9px,#6c6867 530.7px,#6b6360 574.9px,#6b625c 1029.3px);"></div><div style="left:300px;top:0;width:12px;height:965px;background:linear-gradient(to bottom,#556791 -61.1px,#586e99 11.0px,#5c75a0 101.2px,#617ba7 168.8px,#6985b2 213.8px,#7491be 258.9px,#809ecb 303.9px,#90b1dc 349.0px,#aacbef 394.1px,#c6e8fc 439.1px,#dcfbff 457.2px,#fbffff 484.2px,#e4fcff 492.1px,#d5ebed 497.3px,#bcd0d0 506.2px,#a9b5b5 515.2px,#8e9393 522.3px,#7c7b7a 527.7px,#6c6867 530.4px,#6b6360 574.3px,#6b625c 1026.1px);"></div><div style="left:312px;top:0;width:12px;height:965px;background:linear-gradient(to bottom,#556791 -57.9px,#586e99 13.8px,#5c75a0 103.4px,#617ba7 170.6px,#6985b2 215.4px,#7491be 260.2px,#809ecb 305.0px,#90b1dc 349.8px,#aacbef 394.6px,#c6e8fc 439.4px,#dcfbff 457.3px,#fbffff 484.2px,#e4fcff 492.0px,#d5ebed 497.2px,#bcd0d0 506.0px,#a9b5b5 515.0px,#8e9393 522.0px,#7c7b7a 527.4px,#6c6867 530.1px,#6b6360 573.8px,#6b625c 1022.9px);"></div><div style="left:324px;top:0;width:12px;height:965px;background:linear-gradient(to bottom,#556791 -54.8px,#586e99 16.5px,#5c75a0 105.5px,#617ba7 172.4px,#6985b2 216.9px,#7491be 261.5px,#809ecb 306.0px,#90b1dc 350.5px,#aacbef 395.1px,#c6e8fc 439.6px,#dcfbff 457.4px,#fbffff 484.2px,#e4fcff 492.0px,#d5ebed 497.1px,#bcd0d0 505.9px,#a9b5b5 514.8px,#8e9393 521.8px,#7c7b7a 527.2px,#6c6867 529.8px,#6b6360 573.3px,#6b625c 1019.8px);"></div><div style="left:336px;top:0;width:12px;height:965px;background:linear-gradient(to bottom,#556791 -51.8px,#586e99 19.1px,#5c75a0 107.7px,#617ba7 174.1px,#6985b2 218.4px,#7491be 262.7px,#809ecb 307.0px,#90b1dc 351.3px,#aacbef 395.6px,#c6e8fc 439.9px,#dcfbff 457.6px,#fbffff 484.2px,#e4fcff 491.9px,#d5ebed 497.0px,#bcd0d0 505.8px,#a9b5b5 514.6px,#8e9393 521.6px,#7c7b7a 526.9px,#6c6867 529.6px,#6b6360 572.7px,#6b625c 1016.8px);"></div><div style="left:348px;top:0;width:12px;height:965px;background:linear-gradient(to bottom,#556791 -48.9px,#586e99 21.6px,#5c75a0 109.7px,#617ba7 175.8px,#6985b2 219.8px,#7491be 263.9px,#809ecb 307.9px,#90b1dc 352.0px,#aacbef 396.1px,#c6e8fc 440.1px,#dcfbff 457.7px,#fbffff 484.2px,#e4fcff 491.9px,#d5ebed 496.9px,#bcd0d0 505.6px,#a9b5b5 514.4px,#8e9393 521.4px,#7c7b7a 526.7px,#6c6867 529.3px,#6b6360 572.3px,#6b625c 1013.9px);"></div><div style="left:360px;top:0;width:12px;height:965px;background:linear-gradient(to bottom,#556791 -46.0px,#586e99 24.1px,#5c75a0 111.7px,#617ba7 177.5px,#6985b2 221.3px,#7491be 265.1px,#809ecb 308.9px,#90b1dc 352.7px,#aacbef 396.5px,#c6e8fc 440.3px,#dcfbff 457.9px,#fbffff 484.1px,#e4fcff 491.8px,#d5ebed 496.8px,#bcd0d0 505.5px,#a9b5b5 514.3px,#8e9393 521.2px,#7c7b7a 526.4px,#6c6867 529.1px,#6b6360 571.8px,#6b625c 1011.0px);"></div><div style="left:372px;top:0;width:12px;height:965px;background:linear-gradient(to bottom,#556791 -43.2px,#586e99 26.5px,#5c75a0 113.7px,#617ba7 179.1px,#6985b2 222.6px,#7491be 266.2px,#809ecb 309.8px,#90b1dc 353.4px,#aacbef 397.0px,#c6e8fc 440.6px,#dcfbff 458.0px,#fbffff 484.1px,#e4fcff 491.8px,#d5ebed 496.8px,#bcd0d0 505.4px,#a9b5b5 514.1px,#8e9393 521.0px,#7c7b7a 526.2px,#6c6867 528.8px,#6b6360 571.3px,#6b625c 1008.2px);"></div><div style="left:384px;top:0;width:12px;height:965px;background:linear-gradient(to bottom,#556791 -40.5px,#586e99 28.9px,#5c75a0 115.6px,#617ba7 180.6px,#6985b2 224.0px,#7491be 267.3px,#809ecb 310.7px,#90b1dc 354.1px,#aacbef 397.4px,#c6e8fc 440.8px,#dcfbff 458.1px,#fbffff 484.1px,#e4fcff 491.7px,#d5ebed 496.7px,#bcd0d0 505.3px,#a9b5b5 513.9px,#8e9393 520.8px,#7c7b7a 526.0px,#6c6867 528.6px,#6b6360 570.8px,#6b625c 1005.5px);"></div><div style="left:396px;top:0;width:12px;height:965px;background:linear-gradient(to bottom,#556791 -37.9px,#586e99 31.2px,#5c75a0 117.4px,#617ba7 182.1px,#6985b2 225.3px,#7491be 268.4px,#809ecb 311.6px,#90b1dc 354.7px,#aacbef 397.8px,#c6e8fc 441.0px,#dcfbff 458.2px,#fbffff 484.1px,#e4fcff 491.7px,#d5ebed 496.6px,#bcd0d0 505.1px,#a9b5b5 513.8px,#8e9393 520.6px,#7c7b7a 525.7px,#6c6867 528.3px,#6b6360 570.4px,#6b625c 1002.9px);"></div><div style="left:408px;top:0;width:12px;height:965px;background:linear-gradient(to bottom,#556791 -35.3px,#586e99 33.4px,#5c75a0 119.2px,#617ba7 183.6px,#6985b2 226.5px,#7491be 269.5px,#809ecb 312.4px,#90b1dc 355.3px,#aacbef 398.3px,#c6e8fc 441.2px,#dcfbff 458.4px,#fbffff 484.1px,#e4fcff 491.6px,#d5ebed 496.6px,#bcd0d0 505.0px,#a9b5b5 513.6px,#8e9393 520.4px,#7c7b7a 525.5px,#6c6867 528.1px,#6b6360 570.0px,#6b625c 1000.3px);"></div><div style="left:420px;top:0;width:12px;height:965px;background:linear-gradient(to bottom,#556791 -32.8px,#586e99 35.5px,#5c75a0 121.0px,#617ba7 185.0px,#6985b2 227.8px,#7491be 270.5px,#809ecb 313.2px,#90b1dc 355.9px,#aacbef 398.7px,#c6e8fc 441.4px,#dcfbff 458.5px,#fbffff 484.1px,#e4fcff 491.6px,#d5ebed 496.5px,#bcd0d0 504.9px,#a9b5b5 513.5px,#8e9393 520.2px,#7c7b7a 525.3px,#6c6867 527.9px,#6b6360 569.5px,#6b625c 997.8px);"></div><div style="left:432px;top:0;width:12px;height:965px;background:linear-gradient(to bottom,#556791 -30.4px,#586e99 37.6px,#5c75a0 122.6px,#617ba7 186.4px,#6985b2 229.0px,#7491be 271.5px,#809ecb 314.0px,#90b1dc 356.5px,#aacbef 399.0px,#c6e8fc 441.6px,#dcfbff 458.6px,#fbffff 484.1px,#e4fcff 491.5px,#d5ebed 496.4px,#bcd0d0 504.8px,#a9b5b5 513.3px,#8e9393 520.0px,#7c7b7a 525.1px,#6c6867 527.7px,#6b6360 569.1px,#6b625c 995.4px);"></div><div style="left:444px;top:0;width:12px;height:965px;background:linear-gradient(to bottom,#556791 -28.1px,#586e99 39.6px,#5c75a0 124.3px,#617ba7 187.8px,#6984b1 230.1px,#7390bd 272.4px,#7f9dca 314.8px,#8fb0db 357.1px,#a9caee 399.4px,#c5e7fb 441.8px,#dbfafe 458.7px,#fafefe 484.1px,#e3fbfe 491.5px,#d4eaec 496.4px,#bbcfcf 504.7px,#a8b4b4 513.2px,#8d9292 519.9px,#7b7a79 524.9px,#6c6867 527.5px,#6b6360 568.8px,#6b625c 993.1px);"></div><div style="left:456px;top:0;width:12px;height:965px;background:linear-gradient(to bottom,#556791 -25.9px,#586e99 41.5px,#5c75a0 125.8px,#617ba7 189.0px,#6984b1 231.2px,#7390bd 273.3px,#7f9dca 315.5px,#8fb0db 357.6px,#a9caee 399.8px,#c5e7fb 441.9px,#dbfafe 458.8px,#fafefe 484.1px,#e3fbfe 491.5px,#d4eaec 496.3px,#bbcfcf 504.6px,#a8b4b4 513.1px,#8d9292 519.7px,#7b7a79 524.8px,#6c6867 527.3px,#6b6360 568.4px,#6b625c 990.9px);"></div><div style="left:468px;top:0;width:12px;height:965px;background:linear-gradient(to bottom,#556791 -23.8px,#586e99 43.4px,#5c75a0 127.3px,#617ba7 190.3px,#6984b1 232.3px,#7390bd 274.2px,#7f9dca 316.2px,#8fb0db 358.2px,#a9caee 400.1px,#c5e7fb 442.1px,#dbfafe 458.9px,#fafefe 484.1px,#e3fbfe 491.4px,#d4eaec 496.2px,#bbcfcf 504.5px,#a8b4b4 512.9px,#8d9292 519.5px,#7b7a79 524.6px,#6c6867 527.1px,#6b6360 568.0px,#6b625c 988.8px);"></div><div style="left:480px;top:0;width:12px;height:965px;background:linear-gradient(to bottom,#556791 -21.7px,#586e99 45.2px,#5c75a0 128.8px,#617ba7 191.5px,#6984b1 233.3px,#7390bd 275.1px,#7f9dca 316.9px,#8fb0db 358.7px,#a9caee 400.5px,#c5e7fb 442.3px,#dbfafe 459.0px,#fafefe 484.1px,#e3fbfe 491.4px,#d4eaec 496.2px,#bbcfcf 504.4px,#a8b4b4 512.8px,#8d9292 519.4px,#7b7a79 524.4px,#6c6867 526.9px,#6b6360 567.7px,#6b625c 986.7px);"></div><div style="left:492px;top:0;width:12px;height:965px;background:linear-gradient(to bottom,#556791 -19.7px,#586e99 46.9px,#5c75a0 130.1px,#617ba7 192.6px,#6984b1 234.2px,#7390bd 275.9px,#7f9dca 317.5px,#8fb0db 359.2px,#a9caee 400.8px,#c5e7fb 442.4px,#dbfafe 459.1px,#fafefe 484.1px,#e3fbfe 491.3px,#d4eaec 496.1px,#bbcfcf 504.4px,#a8b4b4 512.7px,#8d9292 519.2px,#7b7a79 524.2px,#6c6867 526.7px,#6b6360 567.3px,#6b625c 984.7px);"></div><div style="left:504px;top:0;width:12px;height:965px;background:linear-gradient(to bottom,#556791 -17.9px,#586e99 48.5px,#5c75a0 131.5px,#617ba7 193.7px,#6984b1 235.2px,#7390bd 276.7px,#7f9dca 318.1px,#8fb0db 359.6px,#a9caee 401.1px,#c5e7fb 442.6px,#dbfafe 459.2px,#fafefe 484.1px,#e3fbfe 491.3px,#d4eaec 496.1px,#bbcfcf 504.3px,#a8b4b4 512.6px,#8d9292 519.1px,#7b7a79 524.1px,#6c6867 526.6px,#6b6360 567.0px,#6b625c 982.9px);"></div><div style="left:516px;top:0;width:12px;height:965px;background:linear-gradient(to bottom,#556791 -16.1px,#586e99 50.1px,#5c75a0 132.7px,#617ba7 194.7px,#6984b1 236.1px,#7390bd 277.4px,#7f9dca 318.7px,#8fb0db 360.1px,#a9caee 401.4px,#c5e7fb 442.7px,#dbfafe 459.3px,#fafefe 484.0px,#e3fbfe 491.3px,#d4eaec 496.0px,#bbcfcf 504.2px,#a8b4b4 512.5px,#8d9292 519.0px,#7b7a79 523.9px,#6c6867 526.4px,#6b6360 566.7px,#6b625c 981.1px);"></div><div style="left:528px;top:0;width:12px;height:965px;background:linear-gradient(to bottom,#556791 -14.4px,#586e99 51.5px,#5c75a0 133.9px,#617ba7 195.7px,#6984b1 236.9px,#7390bd 278.1px,#7f9dca 319.3px,#8fb0db 360.5px,#a9caee 401.7px,#c5e7fb 442.9px,#dbfafe 459.3px,#fafefe 484.0px,#e3fbfe 491.3px,#d4eaec 496.0px,#bbcfcf 504.1px,#a8b4b4 512.4px,#8d9292 518.9px,#7b7a79 523.8px,#6c6867 526.3px,#6b6360 566.4px,#6b625c 979.4px);"></div><div style="left:540px;top:0;width:12px;height:965px;background:linear-gradient(to bottom,#556791 -12.8px,#586e99 52.9px,#5c75a0 135.0px,#617ba7 196.6px,#6984b1 237.7px,#7390bd 278.7px,#7f9dca 319.8px,#8fb0db 360.9px,#a9caee 401.9px,#c5e7fb 443.0px,#dbfafe 459.4px,#fafefe 484.0px,#e3fbfe 491.2px,#d4eaec 495.9px,#bbcfcf 504.1px,#a8b4b4 512.3px,#8d9292 518.7px,#7b7a79 523.7px,#6c6867 526.1px,#6b6360 566.2px,#6b625c 977.8px);"></div><div style="left:552px;top:0;width:12px;height:965px;background:linear-gradient(to bottom,#556791 -11.2px,#586e99 54.2px,#5c75a0 136.1px,#617ba7 197.5px,#6984b1 238.4px,#7390bd 279.4px,#7f9dca 320.3px,#8fb0db 361.2px,#a9caee 402.2px,#c5e7fb 443.1px,#dbfafe 459.5px,#fafefe 484.0px,#e3fbfe 491.2px,#d4eaec 495.9px,#bbcfcf 504.0px,#a8b4b4 512.2px,#8d9292 518.6px,#7b7a79 523.5px,#6c6867 526.0px,#6b6360 565.9px,#6b625c 976.2px);"></div><div style="left:564px;top:0;width:12px;height:965px;background:linear-gradient(to bottom,#556791 -9.8px,#586e99 55.5px,#5c75a0 137.1px,#617ba7 198.3px,#6984b1 239.1px,#7390bd 280.0px,#7f9dca 320.8px,#8fb0db 361.6px,#a9caee 402.4px,#c5e7fb 443.2px,#dbfafe 459.5px,#fafefe 484.0px,#e3fbfe 491.2px,#d4eaec 495.9px,#bbcfcf 503.9px,#a8b4b4 512.1px,#8d9292 518.5px,#7b7a79 523.4px,#6c6867 525.9px,#6b6360 565.7px,#6b625c 974.8px);"></div><div style="left:576px;top:0;width:12px;height:965px;background:linear-gradient(to bottom,#556791 -8.5px,#586e99 56.6px,#5c75a0 138.0px,#617ba7 199.1px,#6984b1 239.8px,#7390bd 280.5px,#7f9dca 321.2px,#8fb0db 361.9px,#a9caee 402.6px,#c5e7fb 443.3px,#dbfafe 459.6px,#fafefe 484.0px,#e3fbfe 491.1px,#d4eaec 495.8px,#bbcfcf 503.9px,#a8b4b4 512.0px,#8d9292 518.4px,#7b7a79 523.3px,#6c6867 525.7px,#6b6360 565.4px,#6b625c 973.5px);"></div><div style="left:588px;top:0;width:12px;height:965px;background:linear-gradient(to bottom,#556791 -7.3px,#586e99 57.7px,#5c75a0 138.9px,#617ba7 199.8px,#6984b1 240.4px,#7390bd 281.0px,#7f9dca 321.6px,#8fb0db 362.2px,#a9caee 402.8px,#c5e7fb 443.4px,#dbfafe 459.7px,#fafefe 484.0px,#e3fbfe 491.1px,#d4eaec 495.8px,#bbcfcf 503.8px,#a8b4b4 511.9px,#8d9292 518.3px,#7b7a79 523.2px,#6c6867 525.6px,#6b6360 565.2px,#6b625c 972.3px);"></div><div style="left:600px;top:0;width:12px;height:965px;background:linear-gradient(to bottom,#556791 -6.1px,#586e99 58.7px,#5c75a0 139.7px,#617ba7 200.5px,#6984b1 241.0px,#7390bd 281.5px,#7f9dca 322.0px,#8fb0db 362.5px,#a9caed 403.0px,#c5e7fb 443.5px,#dbfafe 459.7px,#fafefe 484.0px,#e3fbfe 491.1px,#d4eaec 495.8px,#bbcfcf 503.8px,#a8b4b4 511.9px,#8d9292 518.2px,#7b7a79 523.1px,#6c6867 525.5px,#6b6360 565.0px,#6b625c 971.1px);"></div><div style="left:612px;top:0;width:12px;height:965px;background:linear-gradient(to bottom,#556791 -5.1px,#586e99 59.6px,#5c75a0 140.4px,#617ba7 201.1px,#6984b1 241.5px,#7390bd 281.9px,#7f9dca 322.3px,#8fb0db 362.8px,#a9caed 403.2px,#c5e7fb 443.6px,#dbfafe 459.8px,#fafefe 484.0px,#e3fbfe 491.1px,#d4eaec 495.7px,#bbcfcf 503.7px,#a8b4b4 511.8px,#8d9292 518.2px,#7b7a79 523.0px,#6c6867 525.4px,#6b6360 564.9px,#6b625c 970.1px);"></div><div style="left:624px;top:0;width:12px;height:965px;background:linear-gradient(to bottom,#556791 -4.1px,#586e99 60.4px,#5c75a0 141.1px,#617ba7 201.6px,#6984b1 242.0px,#7390bd 282.3px,#7f9dca 322.6px,#8fb0da 363.0px,#a9caed 403.3px,#c5e7fa 443.7px,#dbfafe 459.8px,#fafefe 484.0px,#e3fbfe 491.1px,#d4eaec 495.7px,#bbcfcf 503.7px,#a8b4b4 511.7px,#8d9292 518.1px,#7b7a79 522.9px,#6c6867 525.4px,#6b6360 564.7px,#6b625c 969.1px);"></div><div style="left:636px;top:0;width:12px;height:965px;background:linear-gradient(to bottom,#556791 -3.3px,#586e99 61.2px,#5c75a0 141.7px,#617ba7 202.1px,#6984b1 242.4px,#7390bd 282.7px,#7f9dca 322.9px,#8fb0da 363.2px,#a9caed 403.5px,#c5e7fa 443.7px,#dbfafe 459.8px,#f9fefe 484.0px,#e3fbfe 491.1px,#d4eaec 495.7px,#bbcfcf 503.6px,#a8b4b4 511.7px,#8d9292 518.0px,#7b7a79 522.9px,#6c6867 525.3px,#6b6360 564.6px,#6b625c 968.3px);"></div><div style="left:648px;top:0;width:12px;height:965px;background:linear-gradient(to bottom,#556791 -2.5px,#586e99 61.8px,#5c75a0 142.2px,#617ba7 202.5px,#6984b1 242.8px,#7390bd 283.0px,#7f9dca 323.2px,#8fb0da 363.4px,#a9caed 403.6px,#c5e7fa 443.8px,#dbfafd 459.9px,#f9fefe 484.0px,#e3fbfe 491.0px,#d4eaec 495.7px,#bbcfcf 503.6px,#a8b4b4 511.7px,#8d9292 518.0px,#7b7a79 522.8px,#6c6867 525.2px,#6b6360 564.4px,#6b625c 967.5px);"></div><div style="left:660px;top:0;width:12px;height:965px;background:linear-gradient(to bottom,#556791 -1.9px,#586e99 62.4px,#5c75a0 142.7px,#617ba7 202.9px,#6984b1 243.1px,#7390bd 283.2px,#7f9dc9 323.4px,#8fb0da 363.5px,#a9caed 403.7px,#c5e7fa 443.9px,#dbf9fd 459.9px,#f9fefe 484.0px,#e3fbfd 491.0px,#d4eaec 495.7px,#bbcfcf 503.6px,#a8b4b4 511.6px,#8d9292 517.9px,#7b7a79 522.8px,#6c6867 525.2px,#6b6360 564.3px,#6b625c 966.9px);"></div><div style="left:672px;top:0;width:12px;height:965px;background:linear-gradient(to bottom,#556791 -1.3px,#586e99 62.9px,#5c75a0 143.1px,#617ba7 203.2px,#6984b1 243.4px,#7390bd 283.5px,#7f9dc9 323.6px,#8fb0da 363.7px,#a9caed 403.8px,#c5e6fa 443.9px,#dbf9fd 459.9px,#f9fefe 484.0px,#e3fafd 491.0px,#d4e9eb 495.6px,#bbcfcf 503.6px,#a8b4b4 511.6px,#8d9292 517.9px,#7b7a79 522.7px,#6c6867 525.1px,#6b6360 564.2px,#6b625c 966.3px);"></div><div style="left:684px;top:0;width:12px;height:965px;background:linear-gradient(to bottom,#556791 -0.8px,#586e99 63.3px,#5c75a0 143.4px,#617ba7 203.5px,#6984b1 243.6px,#7390bd 283.7px,#7f9dc9 323.7px,#8fb0da 363.8px,#a9caec 403.9px,#c5e6fa 443.9px,#dbf9fd 460.0px,#f9fdfd 484.0px,#e2fafd 491.0px,#d4e9eb 495.6px,#bbcfcf 503.5px,#a8b4b4 511.6px,#8d9292 517.9px,#7b7a79 522.7px,#6c6867 525.1px,#6b6360 564.1px,#6b625c 965.8px);"></div><div style="left:696px;top:0;width:12px;height:965px;background:linear-gradient(to bottom,#556791 -0.5px,#586e99 63.6px,#5c75a0 143.7px,#617ba7 203.7px,#6984b1 243.8px,#7390bd 283.8px,#7f9dc9 323.8px,#8fb0da 363.9px,#a9c9ec 403.9px,#c5e6fa 444.0px,#dbf9fd 460.0px,#f9fdfd 484.0px,#e2fafd 491.0px,#d3e9eb 495.6px,#bbcece 503.5px,#a8b4b4 511.5px,#8d9292 517.8px,#7b7a79 522.6px,#6c6867 525.0px,#6b6360 564.1px,#6b625c 965.5px);"></div><div style="left:708px;top:0;width:12px;height:965px;background:linear-gradient(to bottom,#556791 -0.2px,#586e99 63.8px,#5c75a0 143.8px,#617ba7 203.9px,#6984b1 243.9px,#7390bd 283.9px,#7f9dc9 323.9px,#8fb0d9 363.9px,#a9c9ec 404.0px,#c5e6f9 444.0px,#dbf9fd 460.0px,#f9fdfd 484.0px,#e2fafd 491.0px,#d3e9eb 495.6px,#bbcece 503.5px,#a7b4b4 511.5px,#8d9292 517.8px,#7b7a79 522.6px,#6c6867 525.0px,#6b6360 564.0px,#6b625c 965.2px);"></div><div style="left:720px;top:0;width:12px;height:965px;background:linear-gradient(to bottom,#556791 -0.1px,#586e99 63.9px,#5c75a0 144.0px,#617ba7 204.0px,#6984b1 244.0px,#7390bd 284.0px,#7f9dc9 324.0px,#8fb0d9 364.0px,#a9c9ec 404.0px,#c5e6f9 444.0px,#daf9fd 460.0px,#f9fdfd 484.0px,#e2fafd 491.0px,#d3e9eb 495.6px,#bacece 503.5px,#a7b3b3 511.5px,#8c9292 517.8px,#7a7a79 522.6px,#6c6867 525.0px,#6b6360 564.0px,#6b625c 965.1px);"></div><div style="left:732px;top:0;width:12px;height:965px;background:linear-gradient(to bottom,#556791 -0.0px,#586e99 64.0px,#5c75a0 144.0px,#617ba7 204.0px,#6984b1 244.0px,#7390bd 284.0px,#7f9dc9 324.0px,#8fb0d9 364.0px,#a9c9ec 404.0px,#c5e6f9 444.0px,#daf9fd 460.0px,#f8fdfd 484.0px,#e2fafd 491.0px,#d3e9eb 495.6px,#bacece 503.5px,#a7b3b3 511.5px,#8c9292 517.8px,#7a7a79 522.6px,#6c6867 525.0px,#6b6360 564.0px,#6b625c 965.0px);"></div><div style="left:744px;top:0;width:12px;height:965px;background:linear-gradient(to bottom,#556791 -0.0px,#586e99 64.0px,#5c75a0 144.0px,#617ba7 204.0px,#6984b1 244.0px,#7390bd 284.0px,#7f9dc9 324.0px,#8fafd9 364.0px,#a9c9eb 404.0px,#c5e6f9 444.0px,#daf9fc 460.0px,#f8fdfd 484.0px,#e2fafd 491.0px,#d3e9eb 495.6px,#bacece 503.5px,#a7b3b3 511.5px,#8c9292 517.8px,#7a7a79 522.6px,#6c6867 525.0px,#6b6360 564.0px,#6b625c 965.0px);"></div><div style="left:756px;top:0;width:12px;height:965px;background:linear-gradient(to bottom,#556791 -0.2px,#586e99 63.8px,#5c75a0 143.9px,#617ba7 203.9px,#6984b1 243.9px,#7390bc 283.9px,#7f9dc9 323.9px,#8fafd9 364.0px,#a9c9eb 404.0px,#c5e6f9 444.0px,#daf9fc 460.0px,#f8fdfd 484.0px,#e2fafc 491.0px,#d3e9eb 495.6px,#bacece 503.5px,#a7b3b3 511.5px,#8c9292 517.8px,#7a7a79 522.6px,#6c6867 525.0px,#6b6360 564.0px,#6b625c 965.2px);"></div><div style="left:768px;top:0;width:12px;height:965px;background:linear-gradient(to bottom,#556791 -0.4px,#586e99 63.6px,#5c75a0 143.7px,#617ba7 203.8px,#6984b1 243.8px,#7390bc 283.8px,#7f9dc8 323.9px,#8fafd8 363.9px,#a9c9eb 403.9px,#c5e6f8 444.0px,#daf8fc 460.0px,#f8fdfd 484.0px,#e2fafc 491.0px,#d3e9eb 495.6px,#bacece 503.5px,#a7b3b3 511.5px,#8c9191 517.8px,#7a7a79 522.6px,#6c6867 525.0px,#6b6360 564.1px,#6b625c 965.4px);"></div><div style="left:780px;top:0;width:12px;height:965px;background:linear-gradient(to bottom,#556791 -0.7px,#586e99 63.4px,#5c75a0 143.5px,#617ba7 203.6px,#6984b1 243.6px,#7390bc 283.7px,#7f9dc8 323.8px,#8fafd8 363.8px,#a9c9eb 403.9px,#c5e5f8 443.9px,#daf8fc 460.0px,#f8fdfd 484.0px,#e2f9fc 491.0px,#d3e9ea 495.6px,#bacece 503.5px,#a7b3b3 511.5px,#8c9191 517.9px,#7a7a79 522.7px,#6c6867 525.1px,#6b6360 564.1px,#6b625c 965.7px);"></div><div style="left:792px;top:0;width:12px;height:965px;background:linear-gradient(to bottom,#556791 -1.2px,#586e99 63.0px,#5c75a0 143.2px,#617ba7 203.3px,#6984b1 243.4px,#7390bc 283.5px,#7f9dc8 323.6px,#8fafd8 363.7px,#a9c9ea 403.8px,#c4e5f8 443.9px,#daf8fc 459.9px,#f8fdfd 484.0px,#e2f9fc 491.0px,#d3e8ea 495.6px,#bacece 503.6px,#a7b3b3 511.6px,#8c9191 517.9px,#7a7a79 522.7px,#6c6867 525.1px,#6b6360 564.2px,#6b625c 966.2px);"></div><div style="left:804px;top:0;width:12px;height:965px;background:linear-gradient(to bottom,#556791 -1.7px,#586e99 62.5px,#5c75a0 142.8px,#617ba7 203.0px,#6984b1 243.2px,#7390bc 283.3px,#7f9dc8 323.4px,#8fafd8 363.6px,#a9c9ea 403.7px,#c4e5f8 443.9px,#daf8fc 459.9px,#f7fcfc 484.0px,#e1f9fc 491.0px,#d3e8ea 495.6px,#bacece 503.6px,#a7b3b3 511.6px,#8c9191 517.9px,#7a7a79 522.7px,#6c6867 525.2px,#6b6360 564.3px,#6b625c 966.7px);"></div><div style="left:816px;top:0;width:12px;height:965px;background:linear-gradient(to bottom,#556791 -2.3px,#586e99 62.0px,#5c75a0 142.4px,#617ba7 202.6px,#6984b1 242.8px,#7390bc 283.0px,#7f9dc8 323.2px,#8fafd8 363.4px,#a9c8ea 403.6px,#c4e5f8 443.8px,#daf8fc 459.9px,#f7fcfc 484.0px,#e1f9fc 491.0px,#d2e8ea 495.7px,#bacdcd 503.6px,#a7b3b3 511.6px,#8c9191 518.0px,#7a7979 522.8px,#6c6867 525.2px,#6b6360 564.4px,#6b625c 967.3px);"></div><div style="left:828px;top:0;width:12px;height:965px;background:linear-gradient(to bottom,#556791 -3.1px,#586e99 61.3px,#5c75a0 141.8px,#617ba7 202.2px,#6984b1 242.5px,#7390bc 282.7px,#7f9dc8 323.0px,#8fafd7 363.2px,#a9c8ea 403.5px,#c4e5f8 443.8px,#daf8fb 459.9px,#f7fcfc 484.0px,#e1f9fc 491.1px,#d2e8ea 495.7px,#bacdcd 503.6px,#a7b3b3 511.7px,#8c9191 518.0px,#7a7979 522.9px,#6c6867 525.3px,#6b6360 564.5px,#6b625c 968.1px);"></div><div style="left:840px;top:0;width:12px;height:965px;background:linear-gradient(to bottom,#556791 -3.9px,#586e99 60.6px,#5c75a0 141.3px,#617ba7 201.7px,#6984b1 242.1px,#7390bc 282.4px,#7f9dc8 322.7px,#8fafd7 363.0px,#a9c8ea 403.4px,#c4e5f7 443.7px,#daf8fb 459.8px,#f7fcfc 484.0px,#e1f9fc 491.1px,#d2e8ea 495.7px,#bacdcd 503.7px,#a6b3b3 511.7px,#8c9191 518.1px,#7a7978 522.9px,#6c6867 525.3px,#6b6360 564.7px,#6b625c 968.9px);"></div><div style="left:852px;top:0;width:12px;height:965px;background:linear-gradient(to bottom,#556791 -4.8px,#586e99 59.8px,#5c75a0 140.6px,#617ba7 201.2px,#6984b1 241.6px,#7390bc 282.0px,#7f9cc7 322.4px,#8fafd7 362.8px,#a9c8e9 403.2px,#c4e5f7 443.6px,#daf7fb 459.8px,#f7fcfc 484.0px,#e1f9fb 491.1px,#d2e8ea 495.7px,#b9cdcd 503.7px,#a6b3b3 511.8px,#8b9191 518.2px,#797978 523.0px,#6c6867 525.4px,#6b6360 564.8px,#6b625c 969.8px);"></div><div style="left:864px;top:0;width:12px;height:965px;background:linear-gradient(to bottom,#556791 -5.8px,#586e99 58.9px,#5c75a0 139.9px,#617ba7 200.6px,#6984b1 241.1px,#7390bc 281.6px,#7f9cc7 322.1px,#8fafd7 362.6px,#a9c8e9 403.0px,#c4e5f7 443.5px,#d9f7fb 459.7px,#f6fcfc 484.0px,#e1f8fb 491.1px,#d2e8ea 495.8px,#b9cdcd 503.8px,#a6b2b2 511.9px,#8b9191 518.2px,#797978 523.1px,#6c6867 525.5px,#6b6360 565.0px,#6b625c 970.8px);"></div><div style="left:876px;top:0;width:12px;height:965px;background:linear-gradient(to bottom,#556791 -7.0px,#586e99 58.0px,#5c75a0 139.1px,#617ba7 200.0px,#6984b1 240.6px,#7390bc 281.1px,#7f9cc7 321.7px,#8fafd7 362.3px,#a9c8e9 402.9px,#c4e4f7 443.4px,#d9f7fb 459.7px,#f6fcfc 484.0px,#e1f8fb 491.1px,#d2e8e9 495.8px,#b9cdcd 503.8px,#a6b2b2 511.9px,#8b9191 518.3px,#797978 523.2px,#6c6867 525.6px,#6b6360 565.2px,#6b625c 972.0px);"></div><div style="left:888px;top:0;width:12px;height:965px;background:linear-gradient(to bottom,#556791 -8.2px,#586e99 56.9px,#5c75a0 138.3px,#617ba7 199.3px,#6984b1 240.0px,#7390bc 280.6px,#7f9cc7 321.3px,#8fafd6 362.0px,#a9c8e9 402.7px,#c4e4f7 443.3px,#d9f7fb 459.6px,#f6fcfc 484.0px,#e1f8fb 491.1px,#d2e7e9 495.8px,#b9cdcd 503.9px,#a6b2b2 512.0px,#8b9191 518.4px,#797978 523.3px,#6c6867 525.7px,#6b6360 565.4px,#6b625c 973.2px);"></div><div style="left:900px;top:0;width:12px;height:965px;background:linear-gradient(to bottom,#556791 -9.5px,#586e99 55.8px,#5c75a0 137.3px,#617ba7 198.5px,#6984b1 239.3px,#7390bc 280.1px,#7f9cc7 320.9px,#8fafd6 361.7px,#a8c8e8 402.5px,#c4e4f6 443.2px,#d9f7fb 459.6px,#f6fbfb 484.0px,#e1f8fb 491.2px,#d2e7e9 495.9px,#b9cdcd 503.9px,#a6b2b2 512.1px,#8b9191 518.5px,#797978 523.4px,#6c6867 525.8px,#6b6360 565.6px,#6b625c 974.5px);"></div><div style="left:912px;top:0;width:12px;height:965px;background:linear-gradient(to bottom,#556791 -10.9px,#586e99 54.6px,#5c75a0 136.4px,#617ba7 197.7px,#6984b1 238.6px,#7390bb 279.5px,#7f9cc7 320.4px,#8faed6 361.3px,#a8c8e8 402.2px,#c4e4f6 443.1px,#d9f7fa 459.5px,#f6fbfb 484.0px,#e0f8fb 491.2px,#d2e7e9 495.9px,#b9cdcd 504.0px,#a6b2b2 512.2px,#8b9191 518.6px,#797978 523.5px,#6c6867 526.0px,#6b6360 565.8px,#6b625c 975.9px);"></div><div style="left:924px;top:0;width:12px;height:965px;background:linear-gradient(to bottom,#556791 -12.4px,#586e99 53.3px,#5c75a0 135.3px,#617ba7 196.9px,#6984b1 237.9px,#7390bb 278.9px,#7f9cc7 319.9px,#8faed6 361.0px,#a8c7e8 402.0px,#c4e4f6 443.0px,#d9f7fa 459.4px,#f6fbfb 484.0px,#e0f8fa 491.2px,#d2e7e9 495.9px,#b9cccc 504.0px,#a6b2b2 512.2px,#8b9191 518.7px,#797978 523.6px,#6c6867 526.1px,#6b6360 566.1px,#6b625c 977.4px);"></div><div style="left:936px;top:0;width:12px;height:965px;background:linear-gradient(to bottom,#556791 -14.0px,#586e99 51.9px,#5c75a0 134.2px,#617ba7 195.9px,#6984b1 237.1px,#7390bb 278.3px,#7f9cc6 319.4px,#8faed6 360.6px,#a8c7e8 401.7px,#c4e4f6 442.9px,#d9f6fa 459.3px,#f5fbfb 484.0px,#e0f8fa 491.2px,#d1e7e9 496.0px,#b9cccc 504.1px,#a6b2b2 512.3px,#8b9090 518.8px,#797978 523.8px,#6c6867 526.2px,#6b6360 566.4px,#6b625c 979.0px);"></div><div style="left:948px;top:0;width:12px;height:965px;background:linear-gradient(to bottom,#556791 -15.6px,#586e99 50.4px,#5c75a0 133.0px,#617ba7 195.0px,#6984b1 236.3px,#7390bb 277.6px,#7f9cc6 318.9px,#8faed5 360.2px,#a8c7e7 401.5px,#c4e4f5 442.8px,#d9f6fa 459.3px,#f5fbfb 484.0px,#e0f7fa 491.3px,#d1e7e9 496.0px,#b9cccc 504.2px,#a6b2b2 512.4px,#8b9090 518.9px,#797978 523.9px,#6c6867 526.4px,#6b6360 566.6px,#6b625c 980.6px);"></div><div style="left:960px;top:0;width:12px;height:965px;background:linear-gradient(to bottom,#556791 -17.4px,#586e99 48.9px,#5c75a0 131.8px,#617ba7 194.0px,#6984b1 235.4px,#7390bb 276.8px,#7f9cc6 318.3px,#8faed5 359.7px,#a8c7e7 401.2px,#c4e4f5 442.6px,#d9f6fa 459.2px,#f5fbfb 484.1px,#e0f7fa 491.3px,#d1e7e8 496.1px,#b9cccc 504.3px,#a5b2b2 512.5px,#8b9090 519.1px,#797978 524.0px,#6c6867 526.5px,#6b6360 566.9px,#6b625c 982.4px);"></div><div style="left:972px;top:0;width:12px;height:965px;background:linear-gradient(to bottom,#556791 -19.3px,#586e99 47.3px,#5c75a0 130.5px,#617ba7 192.9px,#6984b1 234.5px,#7390bb 276.1px,#7f9cc6 317.7px,#8faed5 359.3px,#a8c7e7 400.9px,#c3e3f5 442.5px,#d9f6fa 459.1px,#f5fbfb 484.1px,#e0f7fa 491.3px,#d1e7e8 496.1px,#b8cccc 504.3px,#a5b2b2 512.7px,#8a9090 519.2px,#787978 524.2px,#6c6867 526.7px,#6b6360 567.3px,#6b625c 984.3px);"></div><div style="left:984px;top:0;width:12px;height:965px;background:linear-gradient(to bottom,#556791 -21.2px,#586e99 45.6px,#5c75a0 129.1px,#617ba7 191.8px,#6984b1 233.5px,#7390bb 275.3px,#7f9cc6 317.0px,#8faed5 358.8px,#a8c7e7 400.5px,#c3e3f5 442.3px,#d8f6f9 459.0px,#f5fbfb 484.1px,#e0f7fa 491.4px,#d1e6e8 496.2px,#b8cccc 504.4px,#a5b1b1 512.8px,#8a9090 519.4px,#787978 524.4px,#6c6867 526.9px,#6b6360 567.6px,#6b625c 986.2px);"></div><div style="left:996px;top:0;width:12px;height:965px;background:linear-gradient(to bottom,#556791 -23.2px,#586e99 43.8px,#5c75a0 127.7px,#617ba7 190.6px,#6984b1 232.5px,#7390bb 274.4px,#7f9cc6 316.4px,#8faed4 358.3px,#a8c7e6 400.2px,#c3e3f5 442.1px,#d8f6f9 458.9px,#f4fbfb 484.1px,#e0f7fa 491.4px,#d1e6e8 496.2px,#b8cccc 504.5px,#a5b1b1 512.9px,#8a9090 519.5px,#787978 524.5px,#6c6867 527.0px,#6b6360 567.9px,#6b625c 988.2px);"></div><div style="left:1008px;top:0;width:12px;height:965px;background:linear-gradient(to bottom,#556791 -25.4px,#586e99 42.0px,#5c75a0 126.2px,#617ba7 189.4px,#6984b1 231.5px,#7390bb 273.6px,#7f9cc6 315.7px,#8faed4 357.8px,#a8c7e6 399.9px,#c3e3f4 442.0px,#d8f6f9 458.8px,#f4fafa 484.1px,#dff7f9 491.4px,#d1e6e8 496.3px,#b8cccc 504.6px,#a5b1b1 513.0px,#8a9090 519.7px,#787978 524.7px,#6c6867 527.2px,#6b6360 568.3px,#6b625c 990.4px);"></div><div style="left:1020px;top:0;width:12px;height:965px;background:linear-gradient(to bottom,#556791 -27.6px,#586e99 40.1px,#5c75a0 124.7px,#617ba7 188.1px,#6984b1 230.4px,#7390bb 272.7px,#7f9cc5 314.9px,#8faed4 357.2px,#a8c7e6 399.5px,#c3e3f4 441.8px,#d8f5f9 458.7px,#f4fafa 484.1px,#dff7f9 491.5px,#d1e6e8 496.3px,#b8cbcb 504.7px,#a5b1b1 513.2px,#8a9090 519.8px,#787978 524.9px,#6c6867 527.4px,#6b6360 568.7px,#6b625c 992.6px);"></div><div style="left:1032px;top:0;width:12px;height:965px;background:linear-gradient(to bottom,#556791 -29.9px,#586e99 38.1px,#5c75a0 123.1px,#617ba7 186.8px,#6984b1 229.2px,#7390bb 271.7px,#7f9cc5 314.2px,#8faed4 356.7px,#a8c6e6 399.1px,#c3e3f4 441.6px,#d8f5f9 458.6px,#f4fafa 484.1px,#dff7f9 491.5px,#d0e6e8 496.4px,#b8cbcb 504.8px,#a5b1b1 513.3px,#8a9090 520.0px,#787878 525.1px,#6c6867 527.6px,#6b6360 569.0px,#6b625c 994.9px);"></div><div style="left:1044px;top:0;width:12px;height:965px;background:linear-gradient(to bottom,#556791 -32.2px,#586e99 36.0px,#5c75a0 121.4px,#617ba7 185.4px,#6984b1 228.1px,#7390bb 270.7px,#7f9cc5 313.4px,#8faed4 356.1px,#a8c6e5 398.8px,#c3e3f4 441.4px,#d8f5f9 458.5px,#f4fafa 484.1px,#dff6f9 491.6px,#d0e6e7 496.5px,#b8cbcb 504.9px,#a5b1b1 513.4px,#8a9090 520.2px,#787878 525.3px,#6c6867 527.8px,#6b6360 569.4px,#6b625c 997.2px);"></div><div style="left:1056px;top:0;width:12px;height:965px;background:linear-gradient(to bottom,#556791 -34.7px,#586e99 33.9px,#5c75a0 119.7px,#617ba7 184.0px,#6984b1 226.9px,#7390bb 269.7px,#7f9cc5 312.6px,#8fadd3 355.5px,#a8c6e5 398.4px,#c3e2f4 441.2px,#d8f5f8 458.4px,#f4fafa 484.1px,#dff6f9 491.6px,#d0e6e7 496.5px,#b8cbcb 505.0px,#a5b1b1 513.6px,#8a9090 520.3px,#787878 525.5px,#6c6867 528.1px,#6b6360 569.9px,#6b625c 999.7px);"></div><div style="left:1068px;top:0;width:12px;height:965px;background:linear-gradient(to bottom,#556791 -37.2px,#586e99 31.7px,#5c75a0 117.9px,#617ba7 182.5px,#6984b1 225.6px,#7390ba 268.7px,#7f9cc5 311.8px,#8fadd3 354.9px,#a8c6e5 397.9px,#c3e2f3 441.0px,#d8f5f8 458.3px,#f3fafa 484.1px,#dff6f9 491.7px,#d0e5e7 496.6px,#b8cbcb 505.1px,#a5b1b1 513.7px,#8a9090 520.5px,#787877 525.7px,#6c6867 528.3px,#6b6360 570.3px,#6b625c 1002.2px);"></div><div style="left:1080px;top:0;width:12px;height:965px;background:linear-gradient(to bottom,#556791 -39.8px,#586e99 29.5px,#5c75a0 116.1px,#617ba7 181.0px,#6984b1 224.3px,#7390ba 267.6px,#7f9cc5 310.9px,#8fadd3 354.2px,#a8c6e5 397.5px,#c3e2f3 440.8px,#d8f5f8 458.1px,#f3fafa 484.1px,#dff6f9 491.7px,#d0e5e7 496.7px,#b8cbcb 505.2px,#a4b1b1 513.9px,#8a9090 520.7px,#787877 525.9px,#6c6867 528.5px,#6b6360 570.7px,#6b625c 1004.8px);"></div><div style="left:1092px;top:0;width:12px;height:965px;background:linear-gradient(to bottom,#556791 -42.5px,#586e99 27.1px,#5c75a0 114.2px,#617ba7 179.5px,#6984b1 223.0px,#738fba 266.5px,#7f9cc5 310.0px,#8fadd3 353.6px,#a8c6e4 397.1px,#c3e2f3 440.6px,#d8f5f8 458.0px,#f3fafa 484.1px,#dff6f8 491.7px,#d0e5e7 496.8px,#b7cbcb 505.4px,#a4b1b1 514.1px,#8a9090 520.9px,#787877 526.1px,#6c6867 528.7px,#6b6360 571.2px,#6b625c 1007.5px);"></div><div style="left:1104px;top:0;width:12px;height:965px;background:linear-gradient(to bottom,#556791 -45.3px,#586e99 24.7px,#5c75a0 112.2px,#617ba7 177.9px,#6984b1 221.6px,#738fba 265.4px,#7f9bc4 309.1px,#8fadd3 352.9px,#a8c6e4 396.6px,#c3e2f3 440.4px,#d7f4f8 457.9px,#f3f9f9 484.1px,#dff6f8 491.8px,#d0e5e7 496.8px,#b7cbcb 505.5px,#a4b1b1 514.2px,#898f8f 521.1px,#777877 526.4px,#6c6867 529.0px,#6b6360 571.7px,#6b625c 1010.3px);"></div><div style="left:1116px;top:0;width:12px;height:965px;background:linear-gradient(to bottom,#556791 -48.1px,#586e99 22.2px,#5c75a0 110.2px,#617ba7 176.2px,#6984b1 220.2px,#738fba 264.2px,#7f9bc4 308.2px,#8fadd2 352.2px,#a8c6e4 396.2px,#c3e2f3 440.2px,#d7f4f8 457.8px,#f3f9f9 484.1px,#def6f8 491.8px,#d0e5e7 496.9px,#b7cbcb 505.6px,#a4b0b0 514.4px,#898f8f 521.3px,#777877 526.6px,#6c6867 529.2px,#6b6360 572.1px,#6b625c 1013.1px);"></div><div style="left:1128px;top:0;width:12px;height:965px;background:linear-gradient(to bottom,#556791 -51.1px,#586e99 19.7px,#5c75a0 108.2px,#617ba7 174.5px,#6984b1 218.8px,#738fba 263.0px,#7f9bc4 307.2px,#8fadd2 351.5px,#a8c6e4 395.7px,#c3e2f2 439.9px,#d7f4f8 457.6px,#f3f9f9 484.2px,#def5f8 491.9px,#d0e5e7 497.0px,#b7caca 505.7px,#a4b0b0 514.6px,#898f8f 521.5px,#777877 526.8px,#6c6867 529.5px,#6b6360 572.6px,#6b625c 1016.1px);"></div><div style="left:1140px;top:0;width:12px;height:965px;background:linear-gradient(to bottom,#556791 -54.1px,#586e99 17.1px,#5c75a0 106.1px,#617ba7 172.8px,#6984b1 217.3px,#738fba 261.8px,#7f9bc4 306.2px,#8fadd2 350.7px,#a8c5e3 395.2px,#c3e2f2 439.7px,#d7f4f7 457.5px,#f2f9f9 484.2px,#def5f8 492.0px,#d0e5e6 497.1px,#b7caca 505.9px,#a4b0b0 514.7px,#898f8f 521.8px,#777877 527.1px,#6c6867 529.8px,#6b6360 573.1px,#6b625c 1019.1px);"></div><div style="left:1152px;top:0;width:12px;height:965px;background:linear-gradient(to bottom,#556791 -57.1px,#586e99 14.5px,#5c75a0 103.9px,#617ba7 171.0px,#6984b1 215.8px,#738fba 260.5px,#7f9bc4 305.2px,#8fadd2 350.0px,#a8c5e3 394.7px,#c2e1f2 439.4px,#d7f4f7 457.3px,#f2f9f9 484.2px,#def5f8 492.0px,#cfe5e6 497.2px,#b7caca 506.0px,#a4b0b0 514.9px,#898f8f 522.0px,#777877 527.3px,#6c6867 530.0px,#6b6360 573.6px,#6b625c 1022.1px);"></div><div style="left:1164px;top:0;width:12px;height:965px;background:linear-gradient(to bottom,#556791 -60.3px,#586e99 11.7px,#5c75a0 101.7px,#617ba7 169.2px,#6984b1 214.2px,#738fba 259.2px,#7f9bc4 304.2px,#8fadd2 349.2px,#a8c5e3 394.2px,#c2e1f2 439.2px,#d7f4f7 457.2px,#f2f9f9 484.2px,#def5f8 492.1px,#cfe5e6 497.2px,#b7caca 506.1px,#a4b0b0 515.1px,#898f8f 522.2px,#777877 527.6px,#6c6867 530.3px,#6b6360 574.2px,#6b625c 1025.3px);"></div><div style="left:1176px;top:0;width:12px;height:965px;background:linear-gradient(to bottom,#556791 -63.5px,#586e99 9.0px,#5c75a0 99.5px,#617ba7 167.4px,#6984b1 212.6px,#738fba 257.9px,#7f9bc4 303.2px,#8fadd2 348.4px,#a8c5e3 393.7px,#c2e1f2 438.9px,#d7f4f7 457.0px,#f2f9f9 484.2px,#def5f7 492.1px,#cfe4e6 497.3px,#b7caca 506.3px,#a4b0b0 515.3px,#898f8f 522.4px,#777877 527.9px,#6c6867 530.6px,#6b6360 574.7px,#6b625c 1028.5px);"></div><div style="left:1188px;top:0;width:12px;height:965px;background:linear-gradient(to bottom,#556791 -66.7px,#586e99 6.1px,#5c75a0 97.2px,#617ba7 165.5px,#6984b1 211.0px,#738fba 256.5px,#7f9bc4 302.1px,#8fadd1 347.6px,#a7c5e3 393.1px,#c2e1f2 438.7px,#d7f4f7 456.9px,#f2f9f9 484.2px,#def5f7 492.2px,#cfe4e6 497.4px,#b7caca 506.4px,#a4b0b0 515.5px,#898f8f 522.7px,#777877 528.1px,#6c6867 530.9px,#6b6360 575.3px,#6b625c 1031.7px);"></div><div style="left:1200px;top:0;width:12px;height:965px;background:linear-gradient(to bottom,#556791 -70.1px,#586e99 3.2px,#5c75a0 94.8px,#617ba7 163.5px,#6984b1 209.4px,#738fba 255.2px,#7f9bc3 301.0px,#8fadd1 346.8px,#a7c5e2 392.6px,#c2e1f1 438.4px,#d7f3f7 456.7px,#f2f9f9 484.2px,#def5f7 492.2px,#cfe4e6 497.5px,#b7caca 506.6px,#a4b0b0 515.7px,#898f8f 522.9px,#777877 528.4px,#6c6867 531.2px,#6b6360 575.8px,#6b625c 1035.1px);"></div><div style="left:1212px;top:0;width:12px;height:965px;background:linear-gradient(to bottom,#556791 -73.5px,#586e99 0.3px,#5c75a0 92.4px,#617ba7 161.6px,#6984b1 207.7px,#738fba 253.8px,#7f9bc3 299.9px,#8fadd1 346.0px,#a7c5e2 392.0px,#c2e1f1 438.1px,#d7f3f7 456.6px,#f1f9f9 484.2px,#def5f7 492.3px,#cfe4e6 497.6px,#b7caca 506.7px,#a3b0b0 515.9px,#898f8f 523.2px,#777877 528.7px,#6c6867 531.5px,#6b6360 576.4px,#6b625c 1038.5px);"></div><div style="left:1224px;top:0;width:12px;height:965px;background:linear-gradient(to bottom,#556791 -77.0px,#586e99 -2.8px,#5c75a0 90.0px,#617ba7 159.6px,#6984b1 206.0px,#738fba 252.3px,#7f9bc3 298.7px,#8facd1 345.1px,#a7c5e2 391.5px,#c2e1f1 437.9px,#d7f3f6 456.4px,#f1f8f8 484.2px,#def5f7 492.4px,#cfe4e6 497.7px,#b7caca 506.8px,#a3b0b0 516.1px,#898f8f 523.4px,#777877 529.0px,#6c6867 531.8px,#6b6360 577.0px,#6b625c 1042.0px);"></div><div style="left:1236px;top:0;width:12px;height:965px;background:linear-gradient(to bottom,#556791 -80.5px,#586e99 -5.8px,#5c75a0 87.5px,#617ba7 157.5px,#6984b1 204.2px,#738fba 250.9px,#7f9bc3 297.6px,#8facd1 344.2px,#a7c5e2 390.9px,#c2e1f1 437.6px,#d7f3f6 456.2px,#f1f8f8 484.3px,#ddf4f7 492.4px,#cfe4e6 497.8px,#b6caca 507.0px,#a3b0b0 516.3px,#898f8f 523.7px,#777877 529.3px,#6c6867 532.1px,#6b6360 577.6px,#6b625c 1045.5px);"></div><div style="left:1248px;top:0;width:12px;height:965px;background:linear-gradient(to bottom,#556791 -84.1px,#586e99 -9.0px,#5c75a0 85.0px,#617ba7 155.5px,#6984b1 202.4px,#738fb9 249.4px,#7f9bc3 296.4px,#8facd1 343.3px,#a7c5e2 390.3px,#c2e1f1 437.3px,#d6f3f6 456.1px,#f1f8f8 484.3px,#ddf4f7 492.5px,#cfe4e5 497.9px,#b6caca 507.2px,#a3b0b0 516.6px,#888f8f 524.0px,#767877 529.6px,#6c6867 532.4px,#6b6360 578.2px,#6b625c 1049.1px);"></div><div style="left:1260px;top:0;width:12px;height:965px;background:linear-gradient(to bottom,#556791 -87.8px,#586e99 -12.1px,#5c75a0 82.4px,#617ba7 153.3px,#6984b1 200.6px,#738fb9 247.9px,#7f9bc3 295.2px,#8facd0 342.4px,#a7c5e2 389.7px,#c2e1f1 437.0px,#d6f3f6 455.9px,#f1f8f8 484.3px,#ddf4f7 492.5px,#cfe4e5 498.0px,#b6c9c9 507.3px,#a3b0b0 516.8px,#888f8f 524.2px,#767877 529.9px,#6c6867 532.7px,#6b6360 578.8px,#6b625c 1052.8px);"></div><div style="left:1272px;top:0;width:12px;height:965px;background:linear-gradient(to bottom,#556791 -91.5px,#586e99 -15.4px,#5c75a0 79.8px,#617ba7 151.2px,#6984b1 198.8px,#738fb9 246.4px,#7f9bc3 293.9px,#8facd0 341.5px,#a7c5e1 389.1px,#c2e0f0 436.7px,#d6f3f6 455.7px,#f1f8f8 484.3px,#ddf4f7 492.6px,#cfe4e5 498.1px,#b6c9c9 507.5px,#a3afaf 517.0px,#888f8f 524.5px,#767877 530.2px,#6c6867 533.1px,#6b6360 579.5px,#6b625c 1056.5px);"></div><div style="left:1284px;top:0;width:12px;height:965px;background:linear-gradient(to bottom,#556791 -95.3px,#586e99 -18.6px,#5c75a0 77.2px,#617ba7 149.0px,#6984b1 196.9px,#738fb9 244.8px,#7f9bc3 292.7px,#8facd0 340.6px,#a7c4e1 388.5px,#c2e0f0 436.4px,#d6f3f6 455.6px,#f1f8f8 484.3px,#ddf4f6 492.7px,#cee4e5 498.2px,#b6c9c9 507.6px,#a3afaf 517.2px,#888f8f 524.8px,#767877 530.5px,#6c6867 533.4px,#6b6360 580.1px,#6b625c 1060.3px);"></div><div style="left:1296px;top:0;width:12px;height:965px;background:linear-gradient(to bottom,#556791 -99.1px,#586e99 -22.0px,#5c75a0 74.5px,#617ba7 146.8px,#6984b1 195.0px,#738fb9 243.2px,#7f9bc3 291.4px,#8facd0 339.7px,#a7c4e1 387.9px,#c2e0f0 436.1px,#d6f3f6 455.4px,#f1f8f8 484.3px,#ddf4f6 492.7px,#cee4e5 498.3px,#b6c9c9 507.8px,#a3afaf 517.5px,#888f8f 525.1px,#767777 530.8px,#6c6867 533.7px,#6b6360 580.7px,#6b625c 1064.1px);"></div><div style="left:1308px;top:0;width:12px;height:965px;background:linear-gradient(to bottom,#556791 -103.0px,#586e99 -25.4px,#5c75a0 71.7px,#617ba7 144.5px,#6984b1 193.1px,#738fb9 241.6px,#7f9bc3 290.2px,#8facd0 338.7px,#a7c4e1 387.2px,#c2e0f0 435.8px,#d6f3f6 455.2px,#f0f8f8 484.3px,#ddf4f6 492.8px,#cee3e5 498.4px,#b6c9c9 508.0px,#a3afaf 517.7px,#888f8f 525.3px,#767777 531.2px,#6c6867 534.1px,#6b6360 581.4px,#6b625c 1068.0px);"></div><div style="left:1320px;top:0;width:12px;height:965px;background:linear-gradient(to bottom,#556791 -107.0px,#586e99 -28.8px,#5c75a0 69.0px,#617ba7 142.3px,#6984b1 191.1px,#738fb9 240.0px,#7f9bc3 288.9px,#8facd0 337.7px,#a7c4e1 386.6px,#c2e0f0 435.5px,#d6f3f6 455.0px,#f0f8f8 484.3px,#ddf4f6 492.9px,#cee3e5 498.5px,#b6c9c9 508.2px,#a3afaf 517.9px,#888e8e 525.6px,#767777 531.5px,#6c6867 534.4px,#6b6360 582.1px,#6b625c 1072.0px);"></div><div style="left:1332px;top:0;width:12px;height:965px;background:linear-gradient(to bottom,#556791 -111.0px,#586e99 -32.3px,#5c75a0 66.1px,#617ba7 139.9px,#6984b1 189.1px,#738fb9 238.3px,#7f9bc2 287.5px,#8facd0 336.7px,#a7c4e1 385.9px,#c2e0f0 435.1px,#d6f2f6 454.8px,#f0f8f8 484.3px,#ddf4f6 493.0px,#cee3e5 498.6px,#b6c9c9 508.3px,#a3afaf 518.2px,#888e8e 525.9px,#767777 531.8px,#6c6867 534.8px,#6b6360 582.7px,#6b625c 1076.0px);"></div><div style="left:1344px;top:0;width:12px;height:965px;background:linear-gradient(to bottom,#556791 -115.0px,#586e99 -35.8px,#5c75a0 63.3px,#617ba7 137.6px,#6984b1 187.1px,#738fb9 236.7px,#7f9bc2 286.2px,#8facd0 335.7px,#a7c4e1 385.3px,#c2e0f0 434.8px,#d6f2f6 454.6px,#f0f8f8 484.4px,#ddf4f6 493.0px,#cee3e5 498.7px,#b6c9c9 508.5px,#a3afaf 518.4px,#888e8e 526.2px,#767777 532.2px,#6c6867 535.1px,#6b6360 583.4px,#6b625c 1080.0px);"></div><div style="left:1356px;top:0;width:12px;height:965px;background:linear-gradient(to bottom,#556791 -119.1px,#586e99 -39.3px,#5c75a0 60.4px,#617ba7 135.2px,#6984b1 185.1px,#738fb9 235.0px,#7f9bc2 284.9px,#8facd0 334.7px,#a7c4e0 384.6px,#c2e0f0 434.5px,#d6f2f5 454.4px,#f0f8f8 484.4px,#ddf4f6 493.1px,#cee3e5 498.8px,#b6c9c9 508.7px,#a3afaf 518.7px,#888e8e 526.5px,#767777 532.5px,#6c6867 535.5px,#6b6360 584.1px,#6b625c 1084.1px);"></div><div style="left:1368px;top:0;width:12px;height:965px;background:linear-gradient(to bottom,#556791 -123.3px,#586e99 -43.0px,#5c75a0 57.5px,#617ba7 132.8px,#6984b1 183.0px,#738fb9 233.3px,#7f9bc2 283.5px,#8faccf 333.7px,#a7c4e0 383.9px,#c2e0f0 434.2px,#d6f2f5 454.2px,#f0f8f8 484.4px,#ddf4f6 493.2px,#cee3e5 498.9px,#b6c9c9 508.9px,#a3afaf 518.9px,#888e8e 526.8px,#767777 532.8px,#6c6867 535.9px,#6b6360 584.8px,#6b625c 1088.3px);"></div><div style="left:1380px;top:0;width:12px;height:965px;background:linear-gradient(to bottom,#556791 -127.5px,#586e99 -46.6px,#5c75a0 54.5px,#617ba7 130.4px,#6984b1 181.0px,#738fb9 231.5px,#7f9bc2 282.1px,#8faccf 332.7px,#a7c4e0 383.3px,#c2e0f0 433.8px,#d6f2f5 454.1px,#f0f8f8 484.4px,#ddf4f6 493.2px,#cee3e5 499.1px,#b6c9c9 509.1px,#a3afaf 519.2px,#888e8e 527.1px,#767777 533.2px,#6c6867 536.2px,#6b6360 585.5px,#6b625c 1092.5px);"></div><div style="left:1392px;top:0;width:12px;height:965px;background:linear-gradient(to bottom,#556791 -131.8px,#586e99 -50.3px,#5c75a0 51.5px,#617ba7 127.9px,#6984b1 178.9px,#738fb9 229.8px,#7f9bc2 280.7px,#8faccf 331.6px,#a7c4e0 382.6px,#c2e0f0 433.5px,#d6f2f5 453.9px,#f0f8f8 484.4px,#ddf4f6 493.3px,#cee3e5 499.2px,#b6c9c9 509.2px,#a3afaf 519.4px,#888e8e 527.4px,#767776 533.6px,#6c6867 536.6px,#6b6360 586.3px,#6b625c 1096.8px);"></div><div style="left:1404px;top:0;width:12px;height:965px;background:linear-gradient(to bottom,#556791 -136.1px,#586e99 -54.0px,#5c75a0 48.5px,#617ba7 125.4px,#6984b1 176.7px,#738fb9 228.0px,#7f9bc2 279.3px,#8faccf 330.6px,#a7c4e0 381.9px,#c2e0ef 433.1px,#d6f2f5 453.7px,#f0f7f7 484.4px,#ddf3f6 493.4px,#cee3e5 499.3px,#b6c9c9 509.4px,#a3afaf 519.7px,#888e8e 527.8px,#767776 533.9px,#6c6867 537.0px,#6b6360 587.0px,#6b625c 1101.1px);"></div><div style="left:1416px;top:0;width:12px;height:965px;background:linear-gradient(to bottom,#556791 -140.5px,#586e99 -57.8px,#5c75a0 45.5px,#617ba7 122.9px,#6984b1 174.6px,#738fb9 226.2px,#7f9bc2 277.9px,#8faccf 329.5px,#a7c4e0 381.1px,#c2e0ef 432.8px,#d6f2f5 453.5px,#f0f7f7 484.4px,#ddf3f6 493.5px,#cee3e5 499.4px,#b6c9c9 509.6px,#a3afaf 519.9px,#888e8e 528.1px,#767776 534.3px,#6c6867 537.4px,#6b6360 587.7px,#6b625c 1105.5px);"></div><div style="left:1428px;top:0;width:12px;height:965px;background:linear-gradient(to bottom,#556791 -144.9px,#586e99 -61.7px,#5c75a0 42.4px,#617ba7 120.4px,#6984b1 172.4px,#738fb9 224.4px,#7f9bc2 276.4px,#8faccf 328.4px,#a7c4e0 380.4px,#c2e0ef 432.4px,#d6f2f5 453.2px,#f0f7f7 484.5px,#ddf3f6 493.6px,#cee3e5 499.5px,#b6c9c9 509.8px,#a3afaf 520.2px,#888e8e 528.4px,#767776 534.6px,#6c6867 537.8px,#6b6360 588.5px,#6b625c 1109.9px);"></div><div style="left:1440px;top:0;width:12px;height:965px;background:linear-gradient(to bottom,#556791 -149.3px,#586e99 -65.5px,#5c75a0 39.2px,#617ba7 117.8px,#6984b1 170.2px,#738fb9 222.6px,#7f9bc2 274.9px,#8faccf 327.3px,#a7c4e0 379.7px,#c2e0ef 432.1px,#d6f2f5 453.0px,#f0f7f7 484.5px,#ddf3f6 493.6px,#cee3e5 499.7px,#b6c9c9 510.0px,#a3afaf 520.5px,#888e8e 528.7px,#767776 535.0px,#6c6867 538.2px,#6b6360 589.2px,#6b625c 1114.3px);"></div><div style="left:1452px;top:0;width:12px;height:965px;background:linear-gradient(to bottom,#556791 -153.8px,#586e99 -69.4px,#5c75a0 36.1px,#617ba7 115.2px,#6984b1 168.0px,#738fb9 220.7px,#7f9bc2 273.5px,#8faccf 326.2px,#a7c4e0 379.0px,#c2e0ef 431.7px,#d6f2f5 452.8px,#f0f7f7 484.5px,#dcf3f6 493.7px,#cee3e4 499.8px,#b6c9c9 510.2px,#a2afaf 520.7px,#888e8e 529.1px,#767776 535.4px,#6c6867 538.5px,#6b6360 590.0px,#6b625c 1118.8px);"></div><div style="left:1464px;top:0;width:12px;height:965px;background:linear-gradient(to bottom,#556791 -158.4px,#586e99 -73.3px,#5c75a0 32.9px,#617ba7 112.6px,#6984b1 165.7px,#738fb9 218.9px,#7f9bc2 272.0px,#8faccf 325.1px,#a7c4e0 378.2px,#c2e0ef 431.4px,#d6f2f5 452.6px,#f0f7f7 484.5px,#dcf3f6 493.8px,#cee3e4 499.9px,#b6c9c9 510.4px,#a2afaf 521.0px,#888e8e 529.4px,#767776 535.8px,#6c6867 538.9px,#6b6360 590.7px,#6b625c 1123.4px);"></div><div style="left:1476px;top:0;width:3px;height:965px;background:linear-gradient(to bottom,#556791 -161.2px,#586e99 -75.8px,#5c75a0 30.9px,#617ba7 111.0px,#6984b1 164.3px,#738fb9 217.7px,#7f9bc2 271.0px,#8faccf 324.4px,#a7c4e0 377.8px,#c2e0ef 431.1px,#d6f2f5 452.5px,#f0f7f7 484.5px,#dcf3f6 493.8px,#cee3e4 500.0px,#b6c9c9 510.5px,#a2afaf 521.2px,#888e8e 529.6px,#767776 536.0px,#6c6867 539.2px,#6b6360 591.2px,#6b625c 1126.2px);"></div></div><div style="left:430px;top:210px;width:212px;height:52px;background:#323232;"></div><div style="left:430px;top:210px;width:52px;height:52px;background:#666666;"></div><svg style="left:470px;top:224px;" width="12.5" height="24" viewBox="0 0 12.5 24"><polygon points="12.5,0 12.5,24 0,12" fill="#323232"/></svg><div class="t" style="left:498px;top:222.3px;font-size:28px;color:#ffffff;font-weight:bold;letter-spacing:2.6px;text-shadow:0 0 2px #000,1px 1px 0 #111;-webkit-text-stroke:1.2px #fff;">SERVER</div><div style="left:430px;top:276px;width:212px;height:52px;background:#323232;"></div><div style="left:430px;top:276px;width:52px;height:52px;background:#3e3e3e;"></div><svg style="left:470px;top:290px;" width="12.5" height="24" viewBox="0 0 12.5 24"><polygon points="12.5,0 12.5,24 0,12" fill="#323232"/></svg><div class="t" style="left:503px;top:288.3px;font-size:28px;color:#ffffff;font-weight:bold;letter-spacing:2.6px;text-shadow:0 0 2px #000,1px 1px 0 #111;-webkit-text-stroke:1.2px #fff;">CLIENT</div><div style="left:2px;top:1161px;width:1893px;height:5px;background:#191919;"></div><div style="left:2px;top:1166px;width:1893px;height:38px;background:#262626;border-radius:5px 5px 0 0;"></div><div style="left:2px;top:1166px;width:158px;height:38px;background:#383838;border-radius:5px 5px 0 0;"></div><svg style="left:14px;top:1176px;" width="24" height="20" viewBox="0 0 24 20"><path d="M0 0 H11 L14 4.8 H24 V20 H0 Z" fill="#cccccc"/></svg><div class="t" style="left:47px;top:1173.8px;font-size:25px;color:#c4c4c4;">Project</div><svg style="left:180px;top:1174px;" width="20" height="22" viewBox="0 0 20 22"><rect x="0" y="0" width="20" height="22" fill="#cccccc"/><g fill="#262626"><rect x="2.4" y="4" width="11.5" height="2"/><rect x="2.4" y="8" width="15.2" height="2"/><rect x="2.4" y="11.8" width="11.5" height="2"/><rect x="2.4" y="15.8" width="15.2" height="2"/></g></svg><div class="t" style="left:210px;top:1173.8px;font-size:25px;color:#c4c4c4;">Console</div><svg style="left:1826px;top:1175px;" width="18" height="21" viewBox="0 0 18 21"><path d="M3.5 8 V5.5 A5 5 0 0 1 13.5 5.5" fill="none" stroke="#c4c4c4" stroke-width="2"/><rect x="1" y="10" width="16" height="10" rx="1.5" fill="none" stroke="#c4c4c4" stroke-width="2"/></svg><svg style="left:1865px;top:1173px;" width="8" height="24" viewBox="0 0 8 24"><circle cx="4" cy="4" r="2.6" fill="#c4c4c4"/><circle cx="4" cy="12" r="2.6" fill="#c4c4c4"/><circle cx="4" cy="20" r="2.6" fill="#c4c4c4"/></svg><div style="left:2px;top:1204px;width:1893px;height:41px;background:#3c3c3c;"></div><svg style="left:14px;top:1212px;" width="24" height="24" viewBox="0 0 24 24"><rect x="10" y="0" width="4" height="24" fill="#c4c4c4"/><rect x="0" y="10" width="24" height="4" fill="#c4c4c4"/></svg><svg style="left:47.0px;top:1219.5px;" width="14" height="9" viewBox="0 0 14 9"><polygon points="0,0 14,0 7.0,9" fill="#c4c4c4"/></svg><div style="left:965px;top:1208px;width:634px;height:32px;background:#282828;border-radius:6px;box-shadow:inset 0 1px 0 #151515;"></div><div style="left:1565px;top:1209px;width:33px;height:30px;background:#333333;border-radius:0 5px 5px 0;"></div><svg style="left:974px;top:1218px;" width="15" height="15" viewBox="0 0 15 15"><circle cx="5.5" cy="5.5" r="3.8" fill="none" stroke="#e0e0e0" stroke-width="2"/><line x1="8" y1="8" x2="13" y2="13" stroke="#e0e0e0" stroke-width="2.4"/></svg><svg style="left:1570px;top:1213px;" width="24" height="24" viewBox="0 0 24 24"><rect x="1" y="14" width="9" height="9" fill="none" stroke="#c4c4c4" stroke-width="2"/><path d="M6 14 V4 Q6 1 9 1 H20 Q23 1 23 4 V15 Q23 18 20 18 H10" fill="none" stroke="#c4c4c4" stroke-width="2"/><path d="M11 13 L18 6 M13 6 H18 V11" fill="none" stroke="#c4c4c4" stroke-width="2"/></svg><div style="left:1605px;top:1204px;width:2px;height:41px;background:#2a2a2a;"></div><div style="left:1657px;top:1204px;width:2px;height:41px;background:#2a2a2a;"></div><div style="left:1709px;top:1204px;width:2px;height:41px;background:#2a2a2a;"></div><div style="left:1761px;top:1204px;width:2px;height:41px;background:#2a2a2a;"></div><div style="left:1813px;top:1204px;width:2px;height:41px;background:#2a2a2a;"></div><svg style="left:1619px;top:1210px;" width="26" height="28" viewBox="0 0 26 28"><rect x="4" y="0" width="11" height="11" fill="#c4c4c4"/><circle cx="8" cy="19" r="7" fill="#c4c4c4"/><polygon points="17,8 25,20 14,20" fill="#c4c4c4"/></svg><svg style="left:1670px;top:1214px;" width="22" height="22" viewBox="0 0 22 22"><path d="M11 1 H21 V11 L11 21 L1 11 Z" fill="#c4c4c4" transform="rotate(0)"/><circle cx="16" cy="6" r="2" fill="#3c3c3c"/></svg><svg style="left:1721px;top:1211px;" width="26" height="26" viewBox="0 0 26 26"><circle cx="13" cy="13" r="13" fill="#c4c4c4"/><rect x="11" y="5" width="4" height="11" fill="#3c3c3c"/><rect x="11" y="18" width="4" height="4" fill="#3c3c3c"/></svg><svg style="left:1774px;top:1212px;" width="26" height="24" viewBox="0 0 26 24"><polygon points="13,0 16.5,8.5 25.5,9 18.5,15 21,24 13,19 5,24 7.5,15 0.5,9 9.5,8.5" fill="#7f7f7f"/></svg><svg style="left:1823px;top:1212px;" width="32" height="24" viewBox="0 0 32 24"><path d="M2 12 Q16 0 30 12 Q16 24 2 12Z" fill="none" stroke="#c4c4c4" stroke-width="2"/><circle cx="16" cy="12" r="4" fill="none" stroke="#c4c4c4" stroke-width="2"/><line x1="6" y1="22" x2="27" y2="2" stroke="#c4c4c4" stroke-width="2.4"/></svg><div class="t" style="left:1859px;top:1212.8px;font-size:25px;color:#c4c4c4;">27</div><div style="left:2px;top:1245px;width:386px;height:487px;background:#383838;"></div><div style="left:388px;top:1245px;width:26px;height:487px;background:#2f2f2f;"></div><div style="left:392px;top:1289px;width:19px;height:146px;background:#5e5e5e;border-radius:9px;"></div><svg style="left:395.0px;top:1257.5px;" width="14" height="9" viewBox="0 0 14 9"><polygon points="0,9 14,9 7.0,0" fill="#c4c4c4"/></svg><svg style="left:395.0px;top:1710.5px;" width="14" height="9" viewBox="0 0 14 9"><polygon points="0,0 14,0 7.0,9" fill="#c4c4c4"/></svg><div style="left:414px;top:1245px;width:2px;height:487px;background:#242424;"></div><div style="left:416px;top:1245px;width:1479px;height:43px;background:#404040;"></div><div style="left:2px;top:1244px;width:1893px;height:2px;background:#242424;"></div><div style="left:416px;top:1288px;width:1479px;height:402px;background:#313131;"></div><div style="left:416px;top:1690px;width:1479px;height:42px;background:#3e3e3e;"></div><div class="t" style="left:425px;top:1252.8px;font-size:25px;color:#c4c4c4;">Assets</div><div class="t" style="left:534px;top:1252.8px;font-size:25px;color:#c4c4c4;">FishNet</div><div class="t" style="left:656px;top:1252.8px;font-size:25px;color:#c4c4c4;">Demos</div><div class="t" style="left:771px;top:1252.8px;font-size:25px;color:#c4c4c4;">Network LOD</div><div class="t" style="left:959px;top:1252.8px;font-size:25px;color:#d2d2d2;font-weight:bold;">Scenes</div><svg style="left:511.5px;top:1256.5px;" width="13" height="19" viewBox="0 0 13 19"><path d="M2 1.5 L10.5 9.5 L2 17.5" fill="none" stroke="#8e9394" stroke-width="3"/></svg><svg style="left:633.5px;top:1256.5px;" width="13" height="19" viewBox="0 0 13 19"><path d="M2 1.5 L10.5 9.5 L2 17.5" fill="none" stroke="#8e9394" stroke-width="3"/></svg><svg style="left:747px;top:1256.5px;" width="13" height="19" viewBox="0 0 13 19"><path d="M2 1.5 L10.5 9.5 L2 17.5" fill="none" stroke="#8e9394" stroke-width="3"/></svg><svg style="left:934.5px;top:1256.5px;" width="13" height="19" viewBox="0 0 13 19"><path d="M2 1.5 L10.5 9.5 L2 17.5" fill="none" stroke="#8e9394" stroke-width="3"/></svg><div style="left:2px;top:1245px;width:386px;height:487px;overflow:hidden;"><svg style="left:6px;top:22px" width="18" height="15" viewBox="0 0 18 15"><polygon points="0,0 18,0 9,15" fill="#6c6c6c"/></svg><svg style="left:34px;top:18.5px" width="27" height="22" viewBox="0 0 27 22"><path d="M1 21 V2 Q1 1 2 1 H9 L12 4 H22 V8" fill="none" stroke="#c4c4c4" stroke-width="2"/><path d="M1 21 L6 9 H26 L21 21 Z" fill="#c4c4c4"/></svg><div class="t" style="left:66px;top:14.8px;font-size:25px;color:#c8c8c8;font-weight:bold;">Assets</div><svg style="left:34px;top:54px" width="18" height="15" viewBox="0 0 18 15"><polygon points="0,0 18,0 9,15" fill="#6c6c6c"/></svg><svg style="left:62px;top:50.5px" width="27" height="22" viewBox="0 0 27 22"><path d="M1 21 V2 Q1 1 2 1 H9 L12 4 H22 V8" fill="none" stroke="#c4c4c4" stroke-width="2"/><path d="M1 21 L6 9 H26 L21 21 Z" fill="#c4c4c4"/></svg><div class="t" style="left:94px;top:46.8px;font-size:25px;color:#c8c8c8;">FishNet</div><svg style="left:64px;top:84px" width="15" height="18" viewBox="0 0 15 18"><polygon points="0,0 15,9 0,18" fill="#6c6c6c"/></svg><svg style="left:90px;top:82.5px" width="25" height="22" viewBox="0 0 25 22"><path d="M0 2 Q0 0 2 0 H9 L12 3 H23 Q25 3 25 5 V20 Q25 22 23 22 H2 Q0 22 0 20 Z" fill="#c4c4c4"/></svg><div class="t" style="left:122px;top:78.8px;font-size:25px;color:#c8c8c8;">CodeGenerating</div><svg style="left:62px;top:118px" width="18" height="15" viewBox="0 0 18 15"><polygon points="0,0 18,0 9,15" fill="#6c6c6c"/></svg><svg style="left:90px;top:114.5px" width="27" height="22" viewBox="0 0 27 22"><path d="M1 21 V2 Q1 1 2 1 H9 L12 4 H22 V8" fill="none" stroke="#c4c4c4" stroke-width="2"/><path d="M1 21 L6 9 H26 L21 21 Z" fill="#c4c4c4"/></svg><div class="t" style="left:122px;top:110.8px;font-size:25px;color:#c8c8c8;">Demos</div><svg style="left:90px;top:150px" width="18" height="15" viewBox="0 0 18 15"><polygon points="0,0 18,0 9,15" fill="#6c6c6c"/></svg><svg style="left:118px;top:146.5px" width="27" height="22" viewBox="0 0 27 22"><path d="M1 21 V2 Q1 1 2 1 H9 L12 4 H22 V8" fill="none" stroke="#c4c4c4" stroke-width="2"/><path d="M1 21 L6 9 H26 L21 21 Z" fill="#c4c4c4"/></svg><div class="t" style="left:150px;top:142.8px;font-size:25px;color:#c8c8c8;">HashGrid</div><svg style="left:146px;top:178.5px" width="25" height="22" viewBox="0 0 25 22"><path d="M0 2 Q0 0 2 0 H9 L12 3 H23 Q25 3 25 5 V20 Q25 22 23 22 H2 Q0 22 0 20 Z" fill="#c4c4c4"/></svg><div class="t" style="left:178px;top:174.8px;font-size:25px;color:#c8c8c8;">Prefabs</div><svg style="left:146px;top:210.5px" width="25" height="22" viewBox="0 0 25 22"><path d="M0 2 Q0 0 2 0 H9 L12 3 H23 Q25 3 25 5 V20 Q25 22 23 22 H2 Q0 22 0 20 Z" fill="#c4c4c4"/></svg><div class="t" style="left:178px;top:206.8px;font-size:25px;color:#c8c8c8;">Scenes</div><svg style="left:146px;top:242.5px" width="25" height="22" viewBox="0 0 25 22"><path d="M0 2 Q0 0 2 0 H9 L12 3 H23 Q25 3 25 5 V20 Q25 22 23 22 H2 Q0 22 0 20 Z" fill="#c4c4c4"/></svg><div class="t" style="left:178px;top:238.8px;font-size:25px;color:#c8c8c8;">Scripts</div><svg style="left:146px;top:274.5px" width="25" height="22" viewBox="0 0 25 22"><path d="M0 2 Q0 0 2 0 H9 L12 3 H23 Q25 3 25 5 V20 Q25 22 23 22 H2 Q0 22 0 20 Z" fill="#c4c4c4"/></svg><div class="t" style="left:178px;top:270.8px;font-size:25px;color:#c8c8c8;">Textures</div><svg style="left:90px;top:310px" width="18" height="15" viewBox="0 0 18 15"><polygon points="0,0 18,0 9,15" fill="#6c6c6c"/></svg><svg style="left:118px;top:306.5px" width="27" height="22" viewBox="0 0 27 22"><path d="M1 21 V2 Q1 1 2 1 H9 L12 4 H22 V8" fill="none" stroke="#c4c4c4" stroke-width="2"/><path d="M1 21 L6 9 H26 L21 21 Z" fill="#c4c4c4"/></svg><div class="t" style="left:150px;top:302.8px;font-size:25px;color:#c8c8c8;">Network LOD</div><svg style="left:146px;top:338.5px" width="25" height="22" viewBox="0 0 25 22"><path d="M0 2 Q0 0 2 0 H9 L12 3 H23 Q25 3 25 5 V20 Q25 22 23 22 H2 Q0 22 0 20 Z" fill="#c4c4c4"/></svg><div class="t" style="left:178px;top:334.8px;font-size:25px;color:#c8c8c8;">Prefabs</div><div style="left:0px;top:365px;width:386px;height:32px;background:#4d4d4d;"></div><svg style="left:146px;top:370.5px" width="25" height="22" viewBox="0 0 25 22"><path d="M0 2 Q0 0 2 0 H9 L12 3 H23 Q25 3 25 5 V20 Q25 22 23 22 H2 Q0 22 0 20 Z" fill="#c4c4c4"/></svg><div class="t" style="left:178px;top:366.8px;font-size:25px;color:#c8c8c8;">Scenes</div><svg style="left:146px;top:402.5px" width="25" height="22" viewBox="0 0 25 22"><path d="M0 2 Q0 0 2 0 H9 L12 3 H23 Q25 3 25 5 V20 Q25 22 23 22 H2 Q0 22 0 20 Z" fill="#c4c4c4"/></svg><div class="t" style="left:178px;top:398.8px;font-size:25px;color:#c8c8c8;">Scripts</div><svg style="left:64px;top:436px" width="15" height="18" viewBox="0 0 15 18"><polygon points="0,0 15,9 0,18" fill="#6c6c6c"/></svg><svg style="left:90px;top:434.5px" width="25" height="22" viewBox="0 0 25 22"><path d="M0 2 Q0 0 2 0 H9 L12 3 H23 Q25 3 25 5 V20 Q25 22 23 22 H2 Q0 22 0 20 Z" fill="#c4c4c4"/></svg><div class="t" style="left:122px;top:430.8px;font-size:25px;color:#c8c8c8;">Example</div><svg style="left:64px;top:468px" width="15" height="18" viewBox="0 0 15 18"><polygon points="0,0 15,9 0,18" fill="#6c6c6c"/></svg><svg style="left:90px;top:466.5px" width="25" height="22" viewBox="0 0 25 22"><path d="M0 2 Q0 0 2 0 H9 L12 3 H23 Q25 3 25 5 V20 Q25 22 23 22 H2 Q0 22 0 20 Z" fill="#c4c4c4"/></svg><div class="t" style="left:122px;top:462.8px;font-size:25px;color:#c8c8c8;">Plugins</div></div><svg style="left:461.3px;top:1313.9px" width="96.3" height="113.4" viewBox="235 160 1040 1225" preserveAspectRatio="none"><polygon points="235,440 715,160 715,370 510,490 755,635 1000,490 800,370 800,165 1275,440 755,740" fill="#fafafa"/><polygon points="235,455 755,740 755,1385 255,1080 425,990 665,1120 665,800 415,655 415,895 235,995" fill="#e4e4e4"/><polygon points="1275,455 755,740 755,1385 1255,1080 1085,990 845,1120 845,800 1095,655 1100,895 1275,995" fill="#d6d6d6"/></svg><div class="t" style="left:455px;top:1440.4px;font-size:22px;color:#d2d2d2;">NetworkL...</div><div style="left:1753px;top:1709px;width:110px;height:4px;background:#5a5a5a;"></div><div style="left:1807px;top:1701px;width:20px;height:20px;background:#999999;border-radius:50%;"></div><div style="left:1895px;top:116px;width:4px;height:1616px;background:#191919;"></div><div style="left:1899px;top:116px;width:961px;height:37px;background:#262626;border-radius:5px 5px 0 0;"></div><div style="left:1899px;top:116px;width:186px;height:37px;background:#383838;border-radius:5px 5px 0 0;"></div><svg style="left:1917px;top:126px;" width="20" height="20" viewBox="0 0 20 20"><circle cx="10" cy="10" r="10" fill="#d2d2d2"/><rect x="8" y="8.3" width="4" height="7.8" fill="#2e2e2e"/><rect x="8" y="2" width="4" height="3.8" fill="#5a5a5a"/></svg><div class="t" style="left:1948.5px;top:123.8px;font-size:25px;color:#c4c4c4;">Inspector</div><svg style="left:2791px;top:124px;" width="18" height="21" viewBox="0 0 18 21"><path d="M3.5 8 V5.5 A5 5 0 0 1 13.5 5.5" fill="none" stroke="#c4c4c4" stroke-width="2"/><rect x="1" y="10" width="16" height="10" rx="1.5" fill="none" stroke="#c4c4c4" stroke-width="2"/></svg><svg style="left:2830px;top:122px;" width="8" height="24" viewBox="0 0 8 24"><circle cx="4" cy="4" r="2.6" fill="#c4c4c4"/><circle cx="4" cy="12" r="2.6" fill="#c4c4c4"/><circle cx="4" cy="20" r="2.6" fill="#c4c4c4"/></svg><div style="left:1899px;top:153px;width:938px;height:1579px;background:#383838;overflow:hidden;"><div class="t" style="left:40.5px;top:-4.8px;font-size:24px;color:#d8d8d8;font-weight:bold;">Timing</div><div class="t" style="left:68px;top:35.3px;font-size:25px;color:#c8c8c8;">Update Order</div><div class="t" style="left:68px;top:75.3px;font-size:25px;color:#c8c8c8;">Timing Type</div><div class="t" style="left:68px;top:115.3px;font-size:25px;color:#c8c8c8;">Allow Tick Dropping</div><div class="t" style="left:68px;top:155.3px;font-size:25px;color:#c8c8c8;">Tick Rate</div><div class="t" style="left:68px;top:195.3px;font-size:25px;color:#c8c8c8;">Ping Interval</div><div class="t" style="left:68px;top:235.3px;font-size:25px;color:#c8c8c8;">Timing Interval</div><div style="left:383px;top:31px;width:544px;height:32px;background:#515151;border-radius:4px;box-shadow:0 1px 0 #262626;"></div><div class="t" style="left:392px;top:33.8px;font-size:25px;color:#e6e6e6;">Before Tick</div><svg style="left:902px;top:43px" width="14" height="9" viewBox="0 0 14 9"><polygon points="0,0 14,0 7,9" fill="#c4c4c4"/></svg><div style="left:383px;top:71px;width:544px;height:32px;background:#515151;border-radius:4px;box-shadow:0 1px 0 #262626;"></div><div class="t" style="left:392px;top:73.8px;font-size:25px;color:#e6e6e6;">Tick</div><svg style="left:902px;top:83px" width="14" height="9" viewBox="0 0 14 9"><polygon points="0,0 14,0 7,9" fill="#c4c4c4"/></svg><div style="left:382px;top:113px;width:28px;height:28px;background:#2a2a2a;border-radius:4px;box-shadow:inset 0 0 0 1px #222;"></div><div style="left:382px;top:164.5px;width:436px;height:4px;background:#5e5e5e;"></div><div style="left:389px;top:156.5px;width:20px;height:20px;background:#9a9a9a;border-radius:50%;"></div><div style="left:828px;top:149px;width:99px;height:34px;background:#2a2a2a;border-radius:4px;box-shadow:inset 0 1px 0 #1c1c1c;"></div><div class="t" style="left:836px;top:153.8px;font-size:25px;color:#d2d2d2;">5</div><div style="left:382px;top:204.5px;width:436px;height:4px;background:#5e5e5e;"></div><div style="left:799px;top:196.5px;width:20px;height:20px;background:#9a9a9a;border-radius:50%;"></div><div style="left:828px;top:189px;width:99px;height:34px;background:#2a2a2a;border-radius:4px;box-shadow:inset 0 1px 0 #1c1c1c;"></div><div class="t" style="left:836px;top:193.8px;font-size:25px;color:#d2d2d2;">15</div><div style="left:382px;top:245px;width:436px;height:4px;background:#5e5e5e;"></div><div style="left:799px;top:237px;width:20px;height:20px;background:#9a9a9a;border-radius:50%;"></div><div style="left:828px;top:230px;width:99px;height:34px;background:#2a2a2a;border-radius:4px;box-shadow:inset 0 1px 0 #1c1c1c;"></div><div class="t" style="left:836px;top:234.8px;font-size:25px;color:#d2d2d2;">15</div><div class="t" style="left:38px;top:290.8px;font-size:25px;color:#d8d8d8;font-weight:bold;">Physics</div><div class="t" style="left:68px;top:330.8px;font-size:25px;color:#c8c8c8;">Physics Mode</div><div style="left:383px;top:327px;width:544px;height:32px;background:#515151;border-radius:4px;box-shadow:0 1px 0 #262626;"></div><div class="t" style="left:392px;top:329.8px;font-size:25px;color:#e6e6e6;">Unity</div><svg style="left:902px;top:339px" width="14" height="9" viewBox="0 0 14 9"><polygon points="0,0 14,0 7,9" fill="#c4c4c4"/></svg><div style="left:67px;top:366px;width:860px;height:58px;background:#3b3b3b;border-radius:6px;box-shadow:inset 0 0 0 1px #2a2a2a;"></div><div class="t" style="left:74px;top:371.0px;font-size:21.8px;color:#c4c4c4;">If you are using physics interactions be sure to change the PhysicsMode to</div><div class="t" style="left:74px;top:394.5px;font-size:21.8px;color:#c4c4c4;">TimeManager and implement physics within the TimeManager tick events.</div><div style="left:0px;top:443px;width:938px;height:2px;background:#1f1f1f;"></div><div style="left:0px;top:445px;width:938px;height:40px;background:#3e3e3e;"></div><div style="left:0px;top:484px;width:938px;height:1px;background:#363636;"></div><svg style="left:12px;top:457px" width="18" height="15" viewBox="0 0 18 15"><polygon points="0,0 18,0 9,15" fill="#6e6e6e"/></svg><svg style="left:41px;top:449.5px" width="30" height="30" viewBox="0 0 30 30"><path d="M7.5 0.3 C 2.5 3.5, 0 9, 0 14.8 C 0 23.2, 7 29.5, 15.8 29.5 C 22 29.5, 27.5 25, 30 18.5 C 27 22.5, 23 26, 18 26.5 C 11 26.5, 6.6 20.5, 6.6 13.8 C 6.6 9, 8.5 5, 11.2 3 Z" fill="#3aa6d6"/><path d="M11.2 3 C 13 1.8, 15 1.3, 16.4 1.5 C 20 1.8, 23 2.8, 23 4.6 C 23 6.5, 22 8, 21 8.5 C 19.5 9.5, 18 10, 17.4 10.5 L 17 15.1 L 14.4 13.1 C 13.5 14.5, 13.1 15.5, 13.1 16.4 L 13.1 19.7 C 13.5 21, 16 21.5, 19 21.7 L 19.4 23.6 C 19.6 25.5, 19.7 27.5, 19.7 29.2 C 12 29, 6.6 22, 6.6 13.8 C 6.6 9, 8.5 5, 11.2 3 Z" fill="#dedede"/></svg><div style="left:80px;top:451px;width:28px;height:28px;background:#2a2a2a;border-radius:4px;box-shadow:inset 0 0 0 1px #222;"></div><svg style="left:85px;top:458px" width="18" height="14" viewBox="0 0 18 14"><path d="M1.5 7 L6.5 12 L16.5 2" fill="none" stroke="#e6e6e6" stroke-width="3"/></svg><div class="t" style="left:121px;top:452.8px;font-size:25px;color:#d8d8d8;font-weight:bold;">BandwidthDisplay</div><svg style="left:820px;top:455px" width="20" height="20" viewBox="0 0 20 20"><circle cx="10" cy="10" r="10" fill="#c4c4c4"/><path d="M6.5 7.5 Q6.5 3.8 10 3.8 Q13.5 3.8 13.5 7 Q13.5 9 11.2 10 Q10 10.6 10 12.5" fill="none" stroke="#474747" stroke-width="2.4"/><rect x="8.6" y="14" width="2.8" height="2.8" fill="#474747"/></svg><svg style="left:856px;top:455px" width="22" height="20" viewBox="0 0 22 20"><g fill="#c4c4c4"><rect x="0" y="4" width="22" height="2.6"/><rect x="0" y="13" width="22" height="2.6"/><rect x="13" y="0" width="2.8" height="10"/><rect x="6" y="9" width="2.8" height="11"/></g></svg><svg style="left:906px;top:454px" width="8" height="22" viewBox="0 0 8 22"><g fill="#c4c4c4"><circle cx="4" cy="3" r="2.6"/><circle cx="4" cy="11" r="2.6"/><circle cx="4" cy="19" r="2.6"/></g></svg><div class="t" style="left:39px;top:498.8px;font-size:25px;color:#7e7e7e;">Script</div><div style="left:394px;top:494px;width:533px;height:33px;background:#2f2f2f;border-radius:4px;box-shadow:inset 0 0 0 1px #2a2a2a;"></div><svg style="left:401px;top:500px" width="22" height="22" viewBox="0 0 30 30"><g opacity="0.6"><path d="M7.5 0.3 C 2.5 3.5, 0 9, 0 14.8 C 0 23.2, 7 29.5, 15.8 29.5 C 22 29.5, 27.5 25, 30 18.5 C 27 22.5, 23 26, 18 26.5 C 11 26.5, 6.6 20.5, 6.6 13.8 C 6.6 9, 8.5 5, 11.2 3 Z" fill="#3aa6d6"/><path d="M11.2 3 C 13 1.8, 15 1.3, 16.4 1.5 C 20 1.8, 23 2.8, 23 4.6 C 23 6.5, 22 8, 21 8.5 C 19.5 9.5, 18 10, 17.4 10.5 L 17 15.1 L 14.4 13.1 C 13.5 14.5, 13.1 15.5, 13.1 16.4 L 13.1 19.7 C 13.5 21, 16 21.5, 19 21.7 L 19.4 23.6 C 19.6 25.5, 19.7 27.5, 19.7 29.2 C 12 29, 6.6 22, 6.6 13.8 C 6.6 9, 8.5 5, 11.2 3 Z" fill="#dedede"/></g></svg><div class="t" style="left:427px;top:497.8px;font-size:25px;color:#858585;">BandwidthDisplay</div><svg style="left:899px;top:501px" width="20" height="20" viewBox="0 0 20 20"><circle cx="10" cy="10" r="8.2" fill="none" stroke="#7a7a7a" stroke-width="2"/><circle cx="10" cy="10" r="3" fill="#7a7a7a"/></svg><div class="t" style="left:39px;top:538.8px;font-size:25px;color:#c8c8c8;">Color</div><div style="left:394px;top:534px;width:533px;height:33px;background:#2a2a2a;border-radius:4px;"></div><div style="left:395px;top:535px;width:495px;height:31px;background:#ffffff;"></div><svg style="left:899px;top:539px" width="22" height="22" viewBox="0 0 22 22"><path d="M4 18 L14 8" stroke="#c4c4c4" stroke-width="4" stroke-linecap="round"/><circle cx="17" cy="5" r="4" fill="#c4c4c4"/><path d="M11 5 L17 11" stroke="#c4c4c4" stroke-width="3"/></svg><div class="t" style="left:39px;top:578.8px;font-size:25px;color:#c8c8c8;">Placement</div><div style="left:394px;top:574px;width:533px;height:34px;background:#515151;border-radius:4px;box-shadow:0 1px 0 #262626;"></div><div class="t" style="left:403px;top:578.8px;font-size:25px;color:#e6e6e6;">Bottom Left</div><svg style="left:902px;top:586px" width="14" height="9" viewBox="0 0 14 9"><polygon points="0,0 14,0 7,9" fill="#c4c4c4"/></svg><div class="t" style="left:39px;top:616.3px;font-size:25px;color:#c8c8c8;">Show Outgoing</div><div style="left:394px;top:615px;width:28px;height:28px;background:#2a2a2a;border-radius:4px;box-shadow:inset 0 0 0 1px #222;"></div><svg style="left:399px;top:622px" width="18" height="14" viewBox="0 0 18 14"><path d="M1.5 7 L6.5 12 L16.5 2" fill="none" stroke="#e6e6e6" stroke-width="3"/></svg><div class="t" style="left:39px;top:654.3px;font-size:25px;color:#c8c8c8;">Show Incoming</div><div style="left:394px;top:654px;width:28px;height:28px;background:#2a2a2a;border-radius:4px;box-shadow:inset 0 0 0 1px #222;"></div><svg style="left:399px;top:661px" width="18" height="14" viewBox="0 0 18 14"><path d="M1.5 7 L6.5 12 L16.5 2" fill="none" stroke="#e6e6e6" stroke-width="3"/></svg><div style="left:0px;top:703px;width:938px;height:2px;background:#1f1f1f;"></div><div style="left:0px;top:705px;width:938px;height:40px;background:#3e3e3e;"></div><div style="left:0px;top:744px;width:938px;height:1px;background:#363636;"></div><svg style="left:12px;top:717px" width="18" height="15" viewBox="0 0 18 15"><polygon points="0,0 18,0 9,15" fill="#6e6e6e"/></svg><svg style="left:41px;top:709.5px" width="30" height="30" viewBox="0 0 30 30"><path d="M7.5 0.3 C 2.5 3.5, 0 9, 0 14.8 C 0 23.2, 7 29.5, 15.8 29.5 C 22 29.5, 27.5 25, 30 18.5 C 27 22.5, 23 26, 18 26.5 C 11 26.5, 6.6 20.5, 6.6 13.8 C 6.6 9, 8.5 5, 11.2 3 Z" fill="#3aa6d6"/><path d="M11.2 3 C 13 1.8, 15 1.3, 16.4 1.5 C 20 1.8, 23 2.8, 23 4.6 C 23 6.5, 22 8, 21 8.5 C 19.5 9.5, 18 10, 17.4 10.5 L 17 15.1 L 14.4 13.1 C 13.5 14.5, 13.1 15.5, 13.1 16.4 L 13.1 19.7 C 13.5 21, 16 21.5, 19 21.7 L 19.4 23.6 C 19.6 25.5, 19.7 27.5, 19.7 29.2 C 12 29, 6.6 22, 6.6 13.8 C 6.6 9, 8.5 5, 11.2 3 Z" fill="#dedede"/></svg><div class="t" style="left:121px;top:712.8px;font-size:25px;color:#d8d8d8;font-weight:bold;">StatisticsManager</div><svg style="left:820px;top:715px" width="20" height="20" viewBox="0 0 20 20"><circle cx="10" cy="10" r="10" fill="#c4c4c4"/><path d="M6.5 7.5 Q6.5 3.8 10 3.8 Q13.5 3.8 13.5 7 Q13.5 9 11.2 10 Q10 10.6 10 12.5" fill="none" stroke="#474747" stroke-width="2.4"/><rect x="8.6" y="14" width="2.8" height="2.8" fill="#474747"/></svg><svg style="left:856px;top:715px" width="22" height="20" viewBox="0 0 22 20"><g fill="#c4c4c4"><rect x="0" y="4" width="22" height="2.6"/><rect x="0" y="13" width="22" height="2.6"/><rect x="13" y="0" width="2.8" height="10"/><rect x="6" y="9" width="2.8" height="11"/></g></svg><svg style="left:906px;top:714px" width="8" height="22" viewBox="0 0 8 22"><g fill="#c4c4c4"><circle cx="4" cy="3" r="2.6"/><circle cx="4" cy="11" r="2.6"/><circle cx="4" cy="19" r="2.6"/></g></svg><div class="t" style="left:39px;top:758.8px;font-size:25px;color:#7e7e7e;">Script</div><div style="left:394px;top:754px;width:533px;height:34px;background:#2f2f2f;border-radius:4px;box-shadow:inset 0 0 0 1px #2a2a2a;"></div><svg style="left:401px;top:760px" width="22" height="22" viewBox="0 0 30 30"><g opacity="0.6"><path d="M7.5 0.3 C 2.5 3.5, 0 9, 0 14.8 C 0 23.2, 7 29.5, 15.8 29.5 C 22 29.5, 27.5 25, 30 18.5 C 27 22.5, 23 26, 18 26.5 C 11 26.5, 6.6 20.5, 6.6 13.8 C 6.6 9, 8.5 5, 11.2 3 Z" fill="#3aa6d6"/><path d="M11.2 3 C 13 1.8, 15 1.3, 16.4 1.5 C 20 1.8, 23 2.8, 23 4.6 C 23 6.5, 22 8, 21 8.5 C 19.5 9.5, 18 10, 17.4 10.5 L 17 15.1 L 14.4 13.1 C 13.5 14.5, 13.1 15.5, 13.1 16.4 L 13.1 19.7 C 13.5 21, 16 21.5, 19 21.7 L 19.4 23.6 C 19.6 25.5, 19.7 27.5, 19.7 29.2 C 12 29, 6.6 22, 6.6 13.8 C 6.6 9, 8.5 5, 11.2 3 Z" fill="#dedede"/></g></svg><div class="t" style="left:427px;top:758.8px;font-size:25px;color:#858585;">StatisticsManager</div><svg style="left:899px;top:761px" width="20" height="20" viewBox="0 0 20 20"><circle cx="10" cy="10" r="8.2" fill="none" stroke="#7a7a7a" stroke-width="2"/><circle cx="10" cy="10" r="3" fill="#7a7a7a"/></svg><svg style="left:12px;top:801px" width="16" height="17" viewBox="0 0 16 17"><polygon points="0,0 16,8.5 0,17" fill="#6e6e6e"/></svg><div class="t" style="left:37px;top:796.8px;font-size:25px;color:#c8c8c8;">Network Traffic</div><div style="left:0px;top:845px;width:938px;height:2px;background:#1f1f1f;"></div><div style="left:0px;top:847px;width:938px;height:40px;background:#3e3e3e;"></div><div style="left:0px;top:886px;width:938px;height:1px;background:#363636;"></div><svg style="left:12px;top:859px" width="18" height="15" viewBox="0 0 18 15"><polygon points="0,0 18,0 9,15" fill="#6e6e6e"/></svg><svg style="left:41px;top:851.5px" width="30" height="30" viewBox="0 0 30 30"><path d="M7.5 0.3 C 2.5 3.5, 0 9, 0 14.8 C 0 23.2, 7 29.5, 15.8 29.5 C 22 29.5, 27.5 25, 30 18.5 C 27 22.5, 23 26, 18 26.5 C 11 26.5, 6.6 20.5, 6.6 13.8 C 6.6 9, 8.5 5, 11.2 3 Z" fill="#3aa6d6"/><path d="M11.2 3 C 13 1.8, 15 1.3, 16.4 1.5 C 20 1.8, 23 2.8, 23 4.6 C 23 6.5, 22 8, 21 8.5 C 19.5 9.5, 18 10, 17.4 10.5 L 17 15.1 L 14.4 13.1 C 13.5 14.5, 13.1 15.5, 13.1 16.4 L 13.1 19.7 C 13.5 21, 16 21.5, 19 21.7 L 19.4 23.6 C 19.6 25.5, 19.7 27.5, 19.7 29.2 C 12 29, 6.6 22, 6.6 13.8 C 6.6 9, 8.5 5, 11.2 3 Z" fill="#dedede"/></svg><div class="t" style="left:121px;top:854.8px;font-size:25px;color:#d8d8d8;font-weight:bold;">ObserverManager</div><svg style="left:820px;top:857px" width="20" height="20" viewBox="0 0 20 20"><circle cx="10" cy="10" r="10" fill="#c4c4c4"/><path d="M6.5 7.5 Q6.5 3.8 10 3.8 Q13.5 3.8 13.5 7 Q13.5 9 11.2 10 Q10 10.6 10 12.5" fill="none" stroke="#474747" stroke-width="2.4"/><rect x="8.6" y="14" width="2.8" height="2.8" fill="#474747"/></svg><svg style="left:856px;top:857px" width="22" height="20" viewBox="0 0 22 20"><g fill="#c4c4c4"><rect x="0" y="4" width="22" height="2.6"/><rect x="0" y="13" width="22" height="2.6"/><rect x="13" y="0" width="2.8" height="10"/><rect x="6" y="9" width="2.8" height="11"/></g></svg><svg style="left:906px;top:856px" width="8" height="22" viewBox="0 0 8 22"><g fill="#c4c4c4"><circle cx="4" cy="3" r="2.6"/><circle cx="4" cy="11" r="2.6"/><circle cx="4" cy="19" r="2.6"/></g></svg><div class="t" style="left:39px;top:903.3px;font-size:25px;color:#7e7e7e;">Script:</div><div style="left:383px;top:898px;width:544px;height:33px;background:#2f2f2f;border-radius:4px;box-shadow:inset 0 0 0 1px #2a2a2a;"></div><svg style="left:390px;top:904px" width="22" height="22" viewBox="0 0 30 30"><g opacity="0.6"><path d="M7.5 0.3 C 2.5 3.5, 0 9, 0 14.8 C 0 23.2, 7 29.5, 15.8 29.5 C 22 29.5, 27.5 25, 30 18.5 C 27 22.5, 23 26, 18 26.5 C 11 26.5, 6.6 20.5, 6.6 13.8 C 6.6 9, 8.5 5, 11.2 3 Z" fill="#3aa6d6"/><path d="M11.2 3 C 13 1.8, 15 1.3, 16.4 1.5 C 20 1.8, 23 2.8, 23 4.6 C 23 6.5, 22 8, 21 8.5 C 19.5 9.5, 18 10, 17.4 10.5 L 17 15.1 L 14.4 13.1 C 13.5 14.5, 13.1 15.5, 13.1 16.4 L 13.1 19.7 C 13.5 21, 16 21.5, 19 21.7 L 19.4 23.6 C 19.6 25.5, 19.7 27.5, 19.7 29.2 C 12 29, 6.6 22, 6.6 13.8 C 6.6 9, 8.5 5, 11.2 3 Z" fill="#dedede"/></g></svg><div class="t" style="left:416px;top:901.8px;font-size:25px;color:#858585;">ObserverManager</div><svg style="left:899px;top:905px" width="20" height="20" viewBox="0 0 20 20"><circle cx="10" cy="10" r="8.2" fill="none" stroke="#7a7a7a" stroke-width="2"/><circle cx="10" cy="10" r="3" fill="#7a7a7a"/></svg><div class="t" style="left:39px;top:942.3px;font-size:25px;color:#c8c8c8;">Use Network Lod</div><div style="left:382px;top:941px;width:28px;height:28px;background:#2a2a2a;border-radius:4px;box-shadow:inset 0 0 0 1px #222;"></div><div class="t" style="left:39px;top:982.3px;font-size:25px;color:#c8c8c8;">Update Host Visibility</div><div style="left:382px;top:981px;width:28px;height:28px;background:#2a2a2a;border-radius:4px;box-shadow:inset 0 0 0 1px #222;"></div><svg style="left:387px;top:988px" width="18" height="14" viewBox="0 0 18 14"><path d="M1.5 7 L6.5 12 L16.5 2" fill="none" stroke="#e6e6e6" stroke-width="3"/></svg><svg style="left:14px;top:1027px" width="16" height="17" viewBox="0 0 16 17"><polygon points="0,0 16,8.5 0,17" fill="#6e6e6e"/></svg><div class="t" style="left:40px;top:1022.3px;font-size:25px;color:#d8d8d8;font-weight:bold;">Default Conditions</div><div style="left:832px;top:1017px;width:95px;height:34px;background:#2a2a2a;border-radius:4px;box-shadow:inset 0 1px 0 #1c1c1c;"></div><div class="t" style="left:840px;top:1021.8px;font-size:25px;color:#d2d2d2;">1</div><div style="left:0px;top:1083px;width:938px;height:2px;background:#1f1f1f;"></div><div style="left:0px;top:1085px;width:938px;height:40px;background:#474747;"></div><div style="left:0px;top:1124px;width:938px;height:1px;background:#363636;"></div><svg style="left:12px;top:1097px" width="18" height="15" viewBox="0 0 18 15"><polygon points="0,0 18,0 9,15" fill="#6e6e6e"/></svg><svg style="left:41px;top:1089.5px" width="30" height="30" viewBox="0 0 30 30"><path d="M7.5 0.3 C 2.5 3.5, 0 9, 0 14.8 C 0 23.2, 7 29.5, 15.8 29.5 C 22 29.5, 27.5 25, 30 18.5 C 27 22.5, 23 26, 18 26.5 C 11 26.5, 6.6 20.5, 6.6 13.8 C 6.6 9, 8.5 5, 11.2 3 Z" fill="#3aa6d6"/><path d="M11.2 3 C 13 1.8, 15 1.3, 16.4 1.5 C 20 1.8, 23 2.8, 23 4.6 C 23 6.5, 22 8, 21 8.5 C 19.5 9.5, 18 10, 17.4 10.5 L 17 15.1 L 14.4 13.1 C 13.5 14.5, 13.1 15.5, 13.1 16.4 L 13.1 19.7 C 13.5 21, 16 21.5, 19 21.7 L 19.4 23.6 C 19.6 25.5, 19.7 27.5, 19.7 29.2 C 12 29, 6.6 22, 6.6 13.8 C 6.6 9, 8.5 5, 11.2 3 Z" fill="#dedede"/></svg><div class="t" style="left:121px;top:1092.8px;font-size:25px;color:#d8d8d8;font-weight:bold;">TransportManager</div><svg style="left:820px;top:1095px" width="20" height="20" viewBox="0 0 20 20"><circle cx="10" cy="10" r="10" fill="#c4c4c4"/><path d="M6.5 7.5 Q6.5 3.8 10 3.8 Q13.5 3.8 13.5 7 Q13.5 9 11.2 10 Q10 10.6 10 12.5" fill="none" stroke="#474747" stroke-width="2.4"/><rect x="8.6" y="14" width="2.8" height="2.8" fill="#474747"/></svg><svg style="left:856px;top:1095px" width="22" height="20" viewBox="0 0 22 20"><g fill="#c4c4c4"><rect x="0" y="4" width="22" height="2.6"/><rect x="0" y="13" width="22" height="2.6"/><rect x="13" y="0" width="2.8" height="10"/><rect x="6" y="9" width="2.8" height="11"/></g></svg><svg style="left:906px;top:1094px" width="8" height="22" viewBox="0 0 8 22"><g fill="#c4c4c4"><circle cx="4" cy="3" r="2.6"/><circle cx="4" cy="11" r="2.6"/><circle cx="4" cy="19" r="2.6"/></g></svg><div class="t" style="left:39px;top:1139.3px;font-size:25px;color:#7e7e7e;">Script</div><div style="left:394px;top:1133px;width:533px;height:34px;background:#2f2f2f;border-radius:4px;box-shadow:inset 0 0 0 1px #2a2a2a;"></div><svg style="left:401px;top:1139px" width="22" height="22" viewBox="0 0 30 30"><g opacity="0.6"><path d="M7.5 0.3 C 2.5 3.5, 0 9, 0 14.8 C 0 23.2, 7 29.5, 15.8 29.5 C 22 29.5, 27.5 25, 30 18.5 C 27 22.5, 23 26, 18 26.5 C 11 26.5, 6.6 20.5, 6.6 13.8 C 6.6 9, 8.5 5, 11.2 3 Z" fill="#3aa6d6"/><path d="M11.2 3 C 13 1.8, 15 1.3, 16.4 1.5 C 20 1.8, 23 2.8, 23 4.6 C 23 6.5, 22 8, 21 8.5 C 19.5 9.5, 18 10, 17.4 10.5 L 17 15.1 L 14.4 13.1 C 13.5 14.5, 13.1 15.5, 13.1 16.4 L 13.1 19.7 C 13.5 21, 16 21.5, 19 21.7 L 19.4 23.6 C 19.6 25.5, 19.7 27.5, 19.7 29.2 C 12 29, 6.6 22, 6.6 13.8 C 6.6 9, 8.5 5, 11.2 3 Z" fill="#dedede"/></g></svg><div class="t" style="left:427px;top:1137.8px;font-size:25px;color:#858585;">TransportManager</div><svg style="left:899px;top:1140px" width="20" height="20" viewBox="0 0 20 20"><circle cx="10" cy="10" r="8.2" fill="none" stroke="#7a7a7a" stroke-width="2"/><circle cx="10" cy="10" r="3" fill="#7a7a7a"/></svg><div class="t" style="left:39px;top:1179.3px;font-size:25px;color:#c8c8c8;">Transport</div><div style="left:394px;top:1173px;width:533px;height:34px;background:#2a2a2a;border-radius:4px;box-shadow:inset 0 1px 0 #1c1c1c;"></div><div style="left:889px;top:1173px;width:38px;height:34px;background:#303030;border-radius:0 4px 4px 0;"></div><svg style="left:402.5px;top:1180px" width="19" height="20" viewBox="0 0 19 20"><g opacity="1"><path d="M0 1 Q0 0 1 0 H14 L19 5 V19 Q19 20 18 20 H1 Q0 20 0 19Z" fill="#eeeeee"/><path d="M7.6 4.3 L6.8 16.4 M11.8 4.3 L11.0 16.4 M3.8 8.0 H15.2 M3.4 12.7 H14.8" stroke="#1f6b25" stroke-width="1.57" fill="none"/></g></svg><div class="t" style="left:427px;top:1177.8px;font-size:25px;color:#d2d2d2;">NetworkManager (Relay Transport Fish N</div><svg style="left:899px;top:1180px" width="20" height="20" viewBox="0 0 20 20"><circle cx="10" cy="10" r="8.2" fill="none" stroke="#c4c4c4" stroke-width="2"/><circle cx="10" cy="10" r="3" fill="#c4c4c4"/></svg><div class="t" style="left:39px;top:1219.3px;font-size:25px;color:#c8c8c8;">Intermediate Layer</div><div style="left:394px;top:1214px;width:533px;height:33px;background:#2a2a2a;border-radius:4px;box-shadow:inset 0 1px 0 #1c1c1c;"></div><div style="left:889px;top:1214px;width:38px;height:33px;background:#303030;border-radius:0 4px 4px 0;"></div><div class="t" style="left:404px;top:1217.8px;font-size:25px;color:#d2d2d2;">None (Intermediate Layer)</div><svg style="left:899px;top:1221px" width="20" height="20" viewBox="0 0 20 20"><circle cx="10" cy="10" r="8.2" fill="none" stroke="#c4c4c4" stroke-width="2"/><circle cx="10" cy="10" r="3" fill="#c4c4c4"/></svg><svg style="left:12px;top:1262px" width="16" height="17" viewBox="0 0 16 17"><polygon points="0,0 16,8.5 0,17" fill="#6e6e6e"/></svg><div class="t" style="left:37px;top:1257.3px;font-size:25px;color:#c8c8c8;">Latency Simulator</div><div style="left:0px;top:1305px;width:938px;height:2px;background:#1f1f1f;"></div><div style="left:0px;top:1307px;width:938px;height:40px;background:#3e3e3e;"></div><div style="left:0px;top:1346px;width:938px;height:1px;background:#363636;"></div><svg style="left:12px;top:1319px" width="18" height="15" viewBox="0 0 18 15"><polygon points="0,0 18,0 9,15" fill="#6e6e6e"/></svg><svg style="left:43px;top:1312.5px" width="25" height="28" viewBox="0 0 25 28"><g opacity="1"><path d="M0 1 Q0 0 1 0 H20 L25 5 V27 Q25 28 24 28 H1 Q0 28 0 27Z" fill="#eeeeee"/><path d="M10.0 6.0 L9.0 23.0 M15.5 6.0 L14.5 23.0 M5.0 11.2 H20.0 M4.5 17.8 H19.5" stroke="#1f6b25" stroke-width="2.20" fill="none"/></g></svg><div style="left:80px;top:1313px;width:28px;height:28px;background:#2a2a2a;border-radius:4px;box-shadow:inset 0 0 0 1px #222;"></div><svg style="left:85px;top:1320px" width="18" height="14" viewBox="0 0 18 14"><path d="M1.5 7 L6.5 12 L16.5 2" fill="none" stroke="#e6e6e6" stroke-width="3"/></svg><div class="t" style="left:121px;top:1314.8px;font-size:25px;color:#d8d8d8;font-weight:bold;">Sync Relay(FishNet)</div><svg style="left:820px;top:1317px" width="20" height="20" viewBox="0 0 20 20"><circle cx="10" cy="10" r="10" fill="#c4c4c4"/><path d="M6.5 7.5 Q6.5 3.8 10 3.8 Q13.5 3.8 13.5 7 Q13.5 9 11.2 10 Q10 10.6 10 12.5" fill="none" stroke="#474747" stroke-width="2.4"/><rect x="8.6" y="14" width="2.8" height="2.8" fill="#474747"/></svg><svg style="left:856px;top:1317px" width="22" height="20" viewBox="0 0 22 20"><g fill="#c4c4c4"><rect x="0" y="4" width="22" height="2.6"/><rect x="0" y="13" width="22" height="2.6"/><rect x="13" y="0" width="2.8" height="10"/><rect x="6" y="9" width="2.8" height="11"/></g></svg><svg style="left:906px;top:1316px" width="8" height="22" viewBox="0 0 8 22"><g fill="#c4c4c4"><circle cx="4" cy="3" r="2.6"/><circle cx="4" cy="11" r="2.6"/><circle cx="4" cy="19" r="2.6"/></g></svg><div class="t" style="left:39px;top:1360.3px;font-size:25px;color:#7e7e7e;">Script</div><div style="left:394px;top:1356px;width:533px;height:34px;background:#2f2f2f;border-radius:4px;box-shadow:inset 0 0 0 1px #2a2a2a;"></div><svg style="left:402.5px;top:1363px" width="19" height="20" viewBox="0 0 19 20"><g opacity="0.6"><path d="M0 1 Q0 0 1 0 H14 L19 5 V19 Q19 20 18 20 H1 Q0 20 0 19Z" fill="#eeeeee"/><path d="M7.6 4.3 L6.8 16.4 M11.8 4.3 L11.0 16.4 M3.8 8.0 H15.2 M3.4 12.7 H14.8" stroke="#1f6b25" stroke-width="1.57" fill="none"/></g></svg><div class="t" style="left:427px;top:1360.8px;font-size:25px;color:#858585;">RelayTransportFishNet</div><svg style="left:899px;top:1363px" width="20" height="20" viewBox="0 0 20 20"><circle cx="10" cy="10" r="8.2" fill="none" stroke="#7a7a7a" stroke-width="2"/><circle cx="10" cy="10" r="3" fill="#7a7a7a"/></svg><div class="t" style="left:39px;top:1401.3px;font-size:25px;color:#c8c8c8;">Room Profile UUID</div><div style="left:394px;top:1395px;width:529px;height:35px;background:#262626;border-radius:4px;box-shadow:inset 0 1px 0 #161616;"></div><div class="t" style="left:39px;top:1441.3px;font-size:25px;color:#c8c8c8;">Transport Type</div><div style="left:394px;top:1437px;width:533px;height:34px;background:#515151;border-radius:4px;box-shadow:0 1px 0 #262626;"></div><div class="t" style="left:403px;top:1441.8px;font-size:25px;color:#e6e6e6;">Websocket</div><svg style="left:902px;top:1449px" width="14" height="9" viewBox="0 0 14 9"><polygon points="0,0 14,0 7,9" fill="#c4c4c4"/></svg><div style="left:0px;top:1488px;width:938px;height:2px;background:#1f1f1f;"></div><div style="left:240px;top:1509px;width:456px;height:44px;background:#585858;border-radius:5px;box-shadow:0 1px 0 #242424;"></div><div class="t" style="left:379px;top:1518.8px;font-size:25px;color:#e4e4e4;">Add Component</div></div><div style="left:1920px;top:1539px;width:894px;height:37px;border:6.5px solid #fe2b0c;border-radius:12px;"></div><div style="left:2837px;top:153px;width:23px;height:1579px;background:#2e2e2e;"></div><svg style="left:2843.0px;top:165.0px;" width="14" height="9" viewBox="0 0 14 9"><polygon points="0,9 14,9 7.0,0" fill="#c4c4c4"/></svg><svg style="left:2843.0px;top:1710.5px;" width="14" height="9" viewBox="0 0 14 9"><polygon points="0,0 14,0 7.0,9" fill="#c4c4c4"/></svg><div style="left:2839px;top:835px;width:19px;height:861px;background:#5d5d5d;border-radius:10px;"></div><svg style="left:2662px;top:1741px;" width="32" height="30" viewBox="0 0 32 30"><g fill="#c8c8c8"><ellipse cx="16" cy="17" rx="8" ry="10.5"/><rect x="11" y="2" width="10" height="5" rx="2"/><rect x="1" y="5" width="5" height="2.4"/><rect x="26" y="5" width="5" height="2.4"/><rect x="0" y="15" width="6" height="2.4"/><rect x="26" y="15" width="6" height="2.4"/><rect x="1" y="25" width="5" height="2.4"/><rect x="26" y="25" width="5" height="2.4"/></g><line x1="3" y1="1" x2="30" y2="29" stroke="#191919" stroke-width="3.4"/><line x1="4" y1="2" x2="29" y2="28" stroke="#c8c8c8" stroke-width="1.2"/></svg><svg style="left:2716px;top:1741px;" width="32" height="30" viewBox="0 0 32 30"><g fill="#c8c8c8"><ellipse cx="15" cy="7" rx="12" ry="5.5"/><path d="M3 11 Q15 18 27 11 V16 Q15 23 3 16Z"/><path d="M3 19 Q15 26 27 19 V23 Q15 30 3 23Z"/></g><line x1="2" y1="1" x2="30" y2="29" stroke="#191919" stroke-width="3.4"/><line x1="3" y1="2" x2="29.5" y2="28.5" stroke="#c8c8c8" stroke-width="1.2"/></svg><svg style="left:2768px;top:1741px;" width="32" height="30" viewBox="0 0 32 30"><circle cx="16" cy="15" r="11.5" fill="none" stroke="#c8c8c8" stroke-width="2.6" stroke-dasharray="9 3.5"/><path d="M13 8 L19 8 L17 15 L21 15 L14 24 L15 17 L11 17Z" fill="#c8c8c8"/><line x1="2" y1="1" x2="30" y2="29" stroke="#191919" stroke-width="3.4"/><line x1="3" y1="2" x2="29.5" y2="28.5" stroke="#c8c8c8" stroke-width="1.2"/></svg><svg style="left:2820px;top:1741px;" width="31" height="30" viewBox="0 0 31 30"><circle cx="15.5" cy="15" r="13.3" fill="none" stroke="#c8c8c8" stroke-width="2"/><path d="M9 15.5 L13.5 19.5 L21 11.5" stroke="#c8c8c8" stroke-width="2.2" fill="none"/></svg></body></html>
